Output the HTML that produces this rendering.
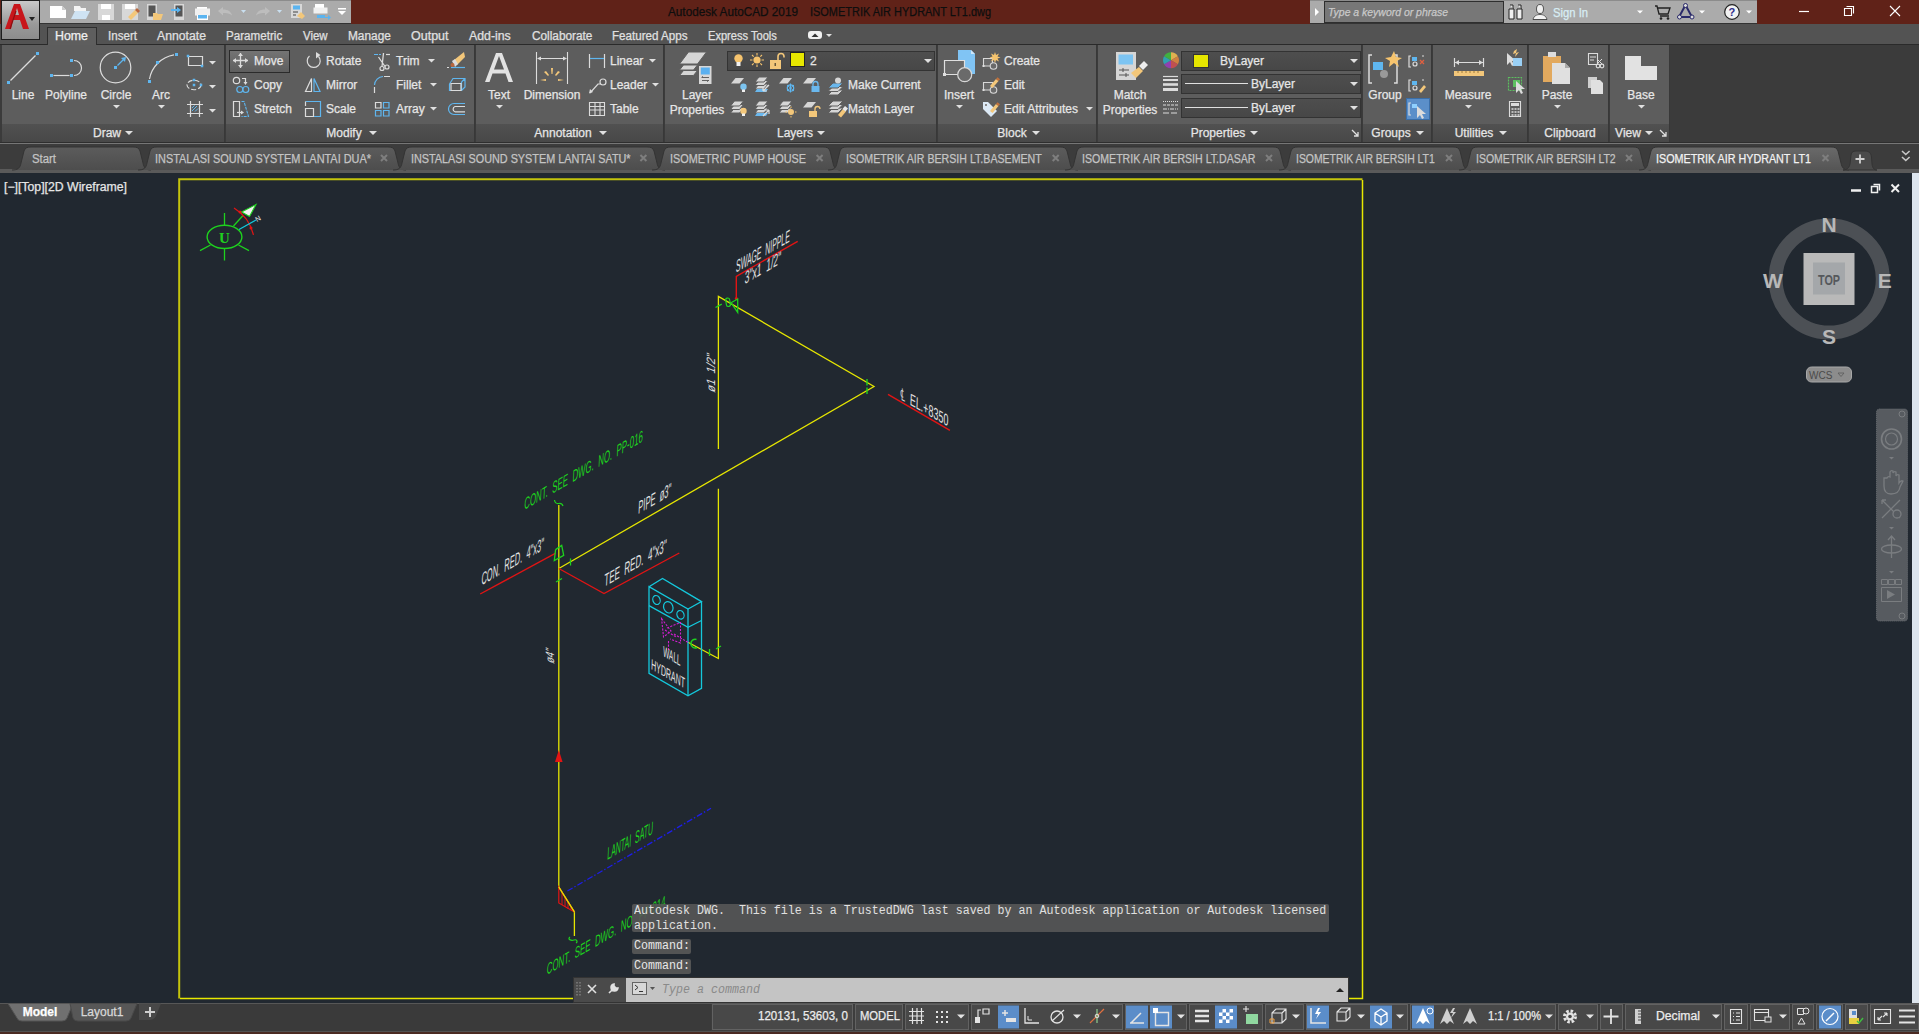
<!DOCTYPE html>
<html><head><meta charset="utf-8"><style>
html,body{margin:0;padding:0;}
body{width:1919px;height:1034px;overflow:hidden;position:relative;background:#212830;font-family:"Liberation Sans", sans-serif;}
svg{position:absolute;overflow:visible;}
.t{-webkit-text-stroke:0.25px currentColor;}
</style></head><body>
<div style="position:absolute;left:0px;top:0px;width:1919px;height:24px;background:#602218"></div><div style="position:absolute;left:1px;top:0px;width:39px;height:40px;background:linear-gradient(#c9c9c9,#9a9a9a 60%,#8c8c8c);border:1px solid #1e1e1e;box-sizing:border-box;z-index:3"></div><svg style="left:1px;top:1px;z-index:4" width="34" height="34" viewBox="0 0 34 34"><path d="M4 28 L13 3 L19 3 L28 28 L22 28 L19 19 L12 19 L10 28 Z M14 14 L18 14 L16 7 Z" fill="#c8161b"/><path d="M9 28 L15 10" stroke="#8a0f12" stroke-width="1.2"/><path d="M31 17 L37 17 L34 21 Z" fill="#222" transform="translate(-3,-1)"/></svg><div style="position:absolute;left:40px;top:0px;width:311px;height:23px;background:#ababab"></div><div style="position:absolute;left:1310px;top:0px;width:447px;height:24px;background:#ababab"></div><div style="position:absolute;left:0px;top:24px;width:1919px;height:1px;background:#2c2c2c"></div><div style="position:absolute;left:40px;top:24px;width:1879px;height:20px;background:#535353"></div><div style="position:absolute;left:0px;top:24px;width:40px;height:20px;background:#535353"></div><div style="position:absolute;left:0px;top:44px;width:1919px;height:1px;background:#2a2a2a"></div><div style="position:absolute;left:47px;top:27px;width:50px;height:18px;background:#5e5e5e;border:1px solid #2e2e2e;border-bottom:none;box-sizing:border-box;z-index:1"></div><svg style="left:0;top:0;z-index:2" width="840" height="44"><rect x="808" y="31" width="14" height="8" rx="3" fill="#f0f0f0"/><path d="M811.5 37 L815 33.5 L818.5 37Z" fill="#333"/><path d="M826 34 h6 l-3 3Z" fill="#e0e0e0"/></svg><div style="position:absolute;left:0px;top:45px;width:1919px;height:98px;background:#3b3b3b"></div><div style="position:absolute;left:2px;top:45px;width:223px;height:97px;background:#5d5d5d;border-right:1px solid #383838;box-sizing:border-box"></div><div style="position:absolute;left:2px;top:124px;width:222px;height:18px;background:linear-gradient(#515151,#484848)"></div><div style="position:absolute;left:226px;top:45px;width:249px;height:97px;background:#5d5d5d;border-right:1px solid #383838;box-sizing:border-box"></div><div style="position:absolute;left:226px;top:124px;width:248px;height:18px;background:linear-gradient(#515151,#484848)"></div><div style="position:absolute;left:476px;top:45px;width:188px;height:97px;background:#5d5d5d;border-right:1px solid #383838;box-sizing:border-box"></div><div style="position:absolute;left:476px;top:124px;width:187px;height:18px;background:linear-gradient(#515151,#484848)"></div><div style="position:absolute;left:665px;top:45px;width:272px;height:97px;background:#5d5d5d;border-right:1px solid #383838;box-sizing:border-box"></div><div style="position:absolute;left:665px;top:124px;width:271px;height:18px;background:linear-gradient(#515151,#484848)"></div><div style="position:absolute;left:938px;top:45px;width:159px;height:97px;background:#5d5d5d;border-right:1px solid #383838;box-sizing:border-box"></div><div style="position:absolute;left:938px;top:124px;width:158px;height:18px;background:linear-gradient(#515151,#484848)"></div><div style="position:absolute;left:1098px;top:45px;width:264px;height:97px;background:#5d5d5d;border-right:1px solid #383838;box-sizing:border-box"></div><div style="position:absolute;left:1098px;top:124px;width:263px;height:18px;background:linear-gradient(#515151,#484848)"></div><div style="position:absolute;left:1363px;top:45px;width:69px;height:97px;background:#5d5d5d;border-right:1px solid #383838;box-sizing:border-box"></div><div style="position:absolute;left:1363px;top:124px;width:68px;height:18px;background:linear-gradient(#515151,#484848)"></div><div style="position:absolute;left:1433px;top:45px;width:95px;height:97px;background:#5d5d5d;border-right:1px solid #383838;box-sizing:border-box"></div><div style="position:absolute;left:1433px;top:124px;width:94px;height:18px;background:linear-gradient(#515151,#484848)"></div><div style="position:absolute;left:1529px;top:45px;width:80px;height:97px;background:#5d5d5d;border-right:1px solid #383838;box-sizing:border-box"></div><div style="position:absolute;left:1529px;top:124px;width:79px;height:18px;background:linear-gradient(#515151,#484848)"></div><div style="position:absolute;left:1610px;top:45px;width:60px;height:97px;background:#5d5d5d;border-right:1px solid #383838;box-sizing:border-box"></div><div style="position:absolute;left:1610px;top:124px;width:59px;height:18px;background:linear-gradient(#515151,#484848)"></div><div style="position:absolute;left:0px;top:45px;width:2px;height:97px;background:#3b3b3b"></div><div style="position:absolute;left:0px;top:142px;width:1919px;height:1px;background:#2e2e2e"></div><div style="position:absolute;left:0px;top:143px;width:1919px;height:1px;background:#767676"></div><div style="position:absolute;left:0px;top:144px;width:1919px;height:29px;background:#3c3c3c"></div><div style="position:absolute;left:0px;top:169px;width:1919px;height:4px;background:#5a5a5a"></div><div style="position:absolute;left:0px;top:1003px;width:1919px;height:29px;background:#3a3a3a"></div><div style="position:absolute;left:0px;top:1032px;width:1919px;height:2px;background:#4a2a22"></div><svg style="left:125px;top:131px" width="8" height="4"><path d="M0 0 L8 0 L4 4 Z" fill="#e0e0e0"/></svg><svg style="left:369px;top:131px" width="8" height="4"><path d="M0 0 L8 0 L4 4 Z" fill="#e0e0e0"/></svg><svg style="left:599px;top:131px" width="8" height="4"><path d="M0 0 L8 0 L4 4 Z" fill="#e0e0e0"/></svg><svg style="left:817px;top:131px" width="8" height="4"><path d="M0 0 L8 0 L4 4 Z" fill="#e0e0e0"/></svg><svg style="left:1032px;top:131px" width="8" height="4"><path d="M0 0 L8 0 L4 4 Z" fill="#e0e0e0"/></svg><svg style="left:1250px;top:131px" width="8" height="4"><path d="M0 0 L8 0 L4 4 Z" fill="#e0e0e0"/></svg><svg style="left:1416px;top:131px" width="8" height="4"><path d="M0 0 L8 0 L4 4 Z" fill="#e0e0e0"/></svg><svg style="left:1499px;top:131px" width="8" height="4"><path d="M0 0 L8 0 L4 4 Z" fill="#e0e0e0"/></svg><svg style="left:1645px;top:131px" width="8" height="4"><path d="M0 0 L8 0 L4 4 Z" fill="#e0e0e0"/></svg><svg style="left:1351px;top:129px" width="9" height="9"><path d="M1 1 L7 7 M3 7 L7 7 L7 3" stroke="#e0e0e0" stroke-width="1.3" fill="none"/></svg><svg style="left:1659px;top:129px" width="9" height="9"><path d="M1 1 L7 7 M3 7 L7 7 L7 3" stroke="#e0e0e0" stroke-width="1.3" fill="none"/></svg><svg style="left:112.5px;top:105px" width="7.0" height="3.5"><path d="M0 0 L7.0 0 L3.5 3.5 Z" fill="#e0e0e0"/></svg><svg style="left:157.5px;top:105px" width="7.0" height="3.5"><path d="M0 0 L7.0 0 L3.5 3.5 Z" fill="#e0e0e0"/></svg><svg style="left:208.5px;top:61px" width="7.0" height="3.5"><path d="M0 0 L7.0 0 L3.5 3.5 Z" fill="#e0e0e0"/></svg><svg style="left:208.5px;top:85px" width="7.0" height="3.5"><path d="M0 0 L7.0 0 L3.5 3.5 Z" fill="#e0e0e0"/></svg><svg style="left:208.5px;top:109px" width="7.0" height="3.5"><path d="M0 0 L7.0 0 L3.5 3.5 Z" fill="#e0e0e0"/></svg><div style="position:absolute;left:229px;top:50px;width:61px;height:23px;background:linear-gradient(#747474,#5e5e5e);border:1px solid #2b2b2b;box-sizing:border-box"></div><svg style="left:427.5px;top:59px" width="7.0" height="3.5"><path d="M0 0 L7.0 0 L3.5 3.5 Z" fill="#e0e0e0"/></svg><svg style="left:429.5px;top:83px" width="7.0" height="3.5"><path d="M0 0 L7.0 0 L3.5 3.5 Z" fill="#e0e0e0"/></svg><svg style="left:429.5px;top:107px" width="7.0" height="3.5"><path d="M0 0 L7.0 0 L3.5 3.5 Z" fill="#e0e0e0"/></svg><svg style="left:495.5px;top:105px" width="7.0" height="3.5"><path d="M0 0 L7.0 0 L3.5 3.5 Z" fill="#e0e0e0"/></svg><svg style="left:648.5px;top:59px" width="7.0" height="3.5"><path d="M0 0 L7.0 0 L3.5 3.5 Z" fill="#e0e0e0"/></svg><svg style="left:651.5px;top:83px" width="7.0" height="3.5"><path d="M0 0 L7.0 0 L3.5 3.5 Z" fill="#e0e0e0"/></svg><div style="position:absolute;left:727px;top:51px;width:208px;height:20px;background:linear-gradient(#4e4e4e,#474747);border:1px solid #333;box-sizing:border-box"></div><svg style="left:924px;top:59px" width="8" height="4"><path d="M0 0 L8 0 L4 4 Z" fill="#e0e0e0"/></svg><svg style="left:955.5px;top:105px" width="7.0" height="3.5"><path d="M0 0 L7.0 0 L3.5 3.5 Z" fill="#e0e0e0"/></svg><svg style="left:1085.5px;top:107px" width="7.0" height="3.5"><path d="M0 0 L7.0 0 L3.5 3.5 Z" fill="#e0e0e0"/></svg><div style="position:absolute;left:1181px;top:51px;width:180px;height:20px;background:linear-gradient(#4e4e4e,#474747);border:1px solid #333;box-sizing:border-box"></div><svg style="left:1350px;top:59px" width="8" height="4"><path d="M0 0 L8 0 L4 4 Z" fill="#e0e0e0"/></svg><div style="position:absolute;left:1181px;top:74px;width:180px;height:20px;background:linear-gradient(#4e4e4e,#474747);border:1px solid #333;box-sizing:border-box"></div><svg style="left:1350px;top:82px" width="8" height="4"><path d="M0 0 L8 0 L4 4 Z" fill="#e0e0e0"/></svg><div style="position:absolute;left:1181px;top:98px;width:180px;height:20px;background:linear-gradient(#4e4e4e,#474747);border:1px solid #333;box-sizing:border-box"></div><svg style="left:1350px;top:106px" width="8" height="4"><path d="M0 0 L8 0 L4 4 Z" fill="#e0e0e0"/></svg><div style="position:absolute;left:1193px;top:54px;width:16px;height:14px;background:#e6e600;border:1px solid #333;box-sizing:border-box"></div><div style="position:absolute;left:1185px;top:83px;width:63px;height:1px;background:#e0e0e0"></div><div style="position:absolute;left:1185px;top:107px;width:63px;height:1px;background:#e0e0e0"></div><svg style="left:1464.5px;top:105px" width="7.0" height="3.5"><path d="M0 0 L7.0 0 L3.5 3.5 Z" fill="#e0e0e0"/></svg><svg style="left:1553.5px;top:105px" width="7.0" height="3.5"><path d="M0 0 L7.0 0 L3.5 3.5 Z" fill="#e0e0e0"/></svg><svg style="left:1637.5px;top:105px" width="7.0" height="3.5"><path d="M0 0 L7.0 0 L3.5 3.5 Z" fill="#e0e0e0"/></svg><div style="position:absolute;left:790px;top:52px;width:15px;height:15px;background:#e6e600;border:1px solid #222;box-sizing:border-box;z-index:6"></div><div style="position:absolute;left:1406px;top:98px;width:24px;height:22px;background:#5b8fc9;border:1px solid #3a6ea8;box-sizing:border-box;z-index:4"></div><svg style="left:0;top:0;z-index:5" width="1919" height="173"><path d="M10.5 80.5 L35.5 55.5" stroke="#dcdcdc" stroke-width="1.2" fill="none" /><rect x="7.0" y="81.0" width="3" height="3" fill="#5fb6ef"/><rect x="36.0" y="52.0" width="3" height="3" fill="#5fb6ef"/><path d="M53.5 75.5 L69.5 75.5" stroke="#dcdcdc" stroke-width="1.2" fill="none" /><path d="M74 60.5 A7.5 7.5 0 0 1 74 75.5" stroke="#dcdcdc" stroke-width="1.2" fill="none" /><rect x="50.0" y="74.0" width="3" height="3" fill="#5fb6ef"/><rect x="70.0" y="74.0" width="3" height="3" fill="#5fb6ef"/><rect x="70.0" y="59.0" width="3" height="3" fill="#5fb6ef"/><circle cx="115.5" cy="67.5" r="15.3" stroke="#dcdcdc" stroke-width="1.2" fill="none"/><rect x="114.0" y="66.0" width="3" height="3" fill="#5fb6ef"/><path d="M117.5 65.5 L124.5 58.5" stroke="#5fb6ef" stroke-width="1.2" fill="none" /><path d="M126 57 L121 58 L125 62 Z" fill="#5fb6ef"/><path d="M149.5 79 A30 30 0 0 1 174 54.8" stroke="#dcdcdc" stroke-width="1.2" fill="none" /><rect x="148.0" y="80.0" width="3" height="3" fill="#5fb6ef"/><rect x="156.0" y="61.0" width="3" height="3" fill="#5fb6ef"/><rect x="175.0" y="53.0" width="3" height="3" fill="#5fb6ef"/><path d="M188.5 56.5 L202.5 56.5 L202.5 65.5 L188.5 65.5 Z" stroke="#dcdcdc" stroke-width="1.2" fill="none" /><rect x="186.75" y="54.75" width="2.5" height="2.5" fill="#5fb6ef"/><rect x="200.75" y="64.75" width="2.5" height="2.5" fill="#5fb6ef"/><ellipse cx="194" cy="85" rx="7" ry="4.7" stroke="#dcdcdc" stroke-width="1.1" fill="none" stroke-dasharray="5 2"/><rect x="192.75" y="78.75" width="2.5" height="2.5" fill="#5fb6ef"/><rect x="192.75" y="83.75" width="2.5" height="2.5" fill="#5fb6ef"/><rect x="199.75" y="83.75" width="2.5" height="2.5" fill="#5fb6ef"/><path d="M187 104.5 L203 104.5 M187 113.5 L203 113.5 M190.5 101 L190.5 117 M199.5 101 L199.5 117" stroke="#dcdcdc" stroke-width="1.2" fill="none" /><path d="M192 111 L197 106 M192 108 L194.5 105.5 M195 111.5 L198 108.5" stroke="#5fb6ef" stroke-width="1" fill="none" /><path d="M233 60.5 L248 60.5 M240.5 53 L240.5 68" stroke="#dcdcdc" stroke-width="1.3" fill="none" /><path d="M233 60.5 L236 58 L236 63Z M248 60.5 L245 58 L245 63Z M240.5 53 L238 56 L243 56Z M240.5 68 L238 65 L243 65Z" fill="#dcdcdc"/><circle cx="236.5" cy="80.5" r="3.2" stroke="#dcdcdc" stroke-width="1.2" fill="none"/><path d="M242 78.5 L245.5 78.5 L245.5 83" stroke="#dcdcdc" stroke-width="1.2" fill="none" /><path d="M243.5 82 L247.5 82 L245.5 85 Z" fill="#dcdcdc"/><circle cx="239.8" cy="89.5" r="3" stroke="#5fb6ef" stroke-width="1.2" fill="none"/><circle cx="245.8" cy="89.5" r="3" stroke="#5fb6ef" stroke-width="1.2" fill="none"/><path d="M233.5 101.5 L239.5 101.5 L239.5 116.5 L233.5 116.5 Z" stroke="#dcdcdc" stroke-width="1.2" fill="none" /><path d="M241.5 101.5 L244 101.5 L248.5 116.5 L241.5 116.5" stroke="#5fb6ef" stroke-width="1.1" fill="none" stroke-dasharray="3 1"/><path d="M237 112.5 L243 112.5" stroke="#dcdcdc" stroke-width="1.2" fill="none" /><path d="M244 112.5 L241 110.5 L241 114.5Z" fill="#dcdcdc"/><path d="M309.5 56 A6.5 6.5 0 1 0 318.5 56.5" stroke="#dcdcdc" stroke-width="1.2" fill="none" /><path d="M316 52 L320.5 55 L316 58.5 Z" fill="#dcdcdc"/><path d="M305.5 91.5 L311.5 91.5 L311.5 78.5 Z" stroke="#dcdcdc" stroke-width="1.2" fill="none" /><path d="M314 91.5 L320 91.5 L314 78.5 Z" stroke="#5fb6ef" stroke-width="1.2" fill="none" /><path d="M305.5 101.5 L320.5 101.5 L320.5 116.5 L314 116.5" stroke="#5fb6ef" stroke-width="1.2" fill="none" /><path d="M305.5 101.5 L305.5 106" stroke="#dcdcdc" stroke-width="1.2" fill="none" /><path d="M305.5 108.5 L313.5 108.5 L313.5 116.5 L305.5 116.5 Z" stroke="#dcdcdc" stroke-width="1.2" fill="none" /><path d="M374 54.5 L378 54.5 M379 54.5 L381 54.5" stroke="#5fb6ef" stroke-width="1.2" fill="none" /><path d="M386 54.5 L390 54.5" stroke="#dcdcdc" stroke-width="1.2" fill="none" /><path d="M378.5 57 L385 66.5 M383.5 53 L382 66.5" stroke="#dcdcdc" stroke-width="1.3" fill="none" /><circle cx="382" cy="68.5" r="2" stroke="#dcdcdc" stroke-width="1.2" fill="none"/><circle cx="387" cy="67" r="2" stroke="#dcdcdc" stroke-width="1.2" fill="none"/><path d="M374.5 85 A9 9 0 0 1 383 76.5" stroke="#5fb6ef" stroke-width="1.2" fill="none" /><path d="M374.5 87 L374.5 93 M384 76.5 L390 76.5" stroke="#dcdcdc" stroke-width="1.2" fill="none" /><path d="M375.5 102.5 h5.5 v5.5 h-5.5 Z" stroke="#dcdcdc" stroke-width="1.2" fill="none" /><path d="M383.5 102.5 h5.5 v5.5 h-5.5 Z" stroke="#5fb6ef" stroke-width="1.2" fill="none" /><path d="M375.5 110.5 h5.5 v5.5 h-5.5 Z" stroke="#5fb6ef" stroke-width="1.2" fill="none" /><path d="M383.5 110.5 h5.5 v5.5 h-5.5 Z" stroke="#5fb6ef" stroke-width="1.2" fill="none" /><path d="M451 67.5 L465 67.5" stroke="#5fb6ef" stroke-width="1.2" fill="none" /><path d="M447 67.5 L449 67.5" stroke="#dcdcdc" stroke-width="1.2" fill="none" /><path d="M454 60 L464 52 L465 57 L457 65 Z" fill="#f3c77a"/><path d="M452 61 L455 59 L458 64 L455 67 Z" fill="#dcdcdc"/><circle cx="452.5" cy="65" r="2" stroke="#b9663d" stroke-width="0" fill="#b9663d"/><path d="M449.5 84 L449.5 90.5 L461.5 90.5 L461.5 82 M449.5 84 L453 78.5 L465 78.5 L465 87 L461.5 90.5 M461.5 82 L465 78.5" stroke="#5fb6ef" stroke-width="1.2" fill="none" /><path d="M451 83.5 h10 v7 h-10 Z" stroke="#dcdcdc" stroke-width="1.2" fill="none" /><path d="M465 103.5 L454 103.5 A5.5 5.5 0 0 0 454 114.5 L465 114.5" stroke="#5fb6ef" stroke-width="1.2" fill="none" /><path d="M465 106.5 L455 106.5 A2.8 2.8 0 0 0 455 111.8 L465 111.8" stroke="#dcdcdc" stroke-width="1.2" fill="none" /><path d="M496 53 L502 53 L513 82 L508.5 82 L505.5 73.5 L492.5 73.5 L489.5 82 L485 82 Z M494 69.5 L504 69.5 L499 56 Z" fill="#e2e2e2"/><path d="M536.5 52 L536.5 84 M567.5 52 L567.5 84 M538 58.5 L566 58.5" stroke="#dcdcdc" stroke-width="1.1" fill="none" /><path d="M537 58.5 L541 56.5 L541 60.5Z M567 58.5 L563 56.5 L563 60.5Z" fill="#dcdcdc"/><path d="M551 68 L553 68 L552.5 74 L551.5 74 Z M544 72 L546 71 L549 75 L548 76 Z M560 72 L558 71 L555 75 L556 76 Z M540 80 L546 79 L546 81 Z M564 80 L558 79 L558 81 Z" fill="#f3c77a"/><path d="M589.5 54 L589.5 68 M604.5 54 L604.5 68" stroke="#dcdcdc" stroke-width="1.2" fill="none" /><path d="M590 58.5 L604 58.5" stroke="#5fb6ef" stroke-width="1.2" fill="none" /><path d="M590 93 L598 84 L600 84" stroke="#dcdcdc" stroke-width="1.2" fill="none" /><circle cx="603" cy="82" r="3" stroke="#dcdcdc" stroke-width="1.2" fill="none"/><path d="M589 93.5 L590 89 L593 92 Z" fill="#dcdcdc"/><path d="M589.5 102.5 h15 v13 h-15 Z M589.5 106.5 h15 M589.5 110 h15 M595 102.5 v13 M600 102.5 v13" stroke="#dcdcdc" stroke-width="1.1" fill="none" /><path d="M683.5 70.5 L697.5 70.5 L693.5 75.5 L679.5 75.5 Z" fill="#d6d6d6" stroke="#5e5e5e" stroke-width="1"/><path d="M683.5 65 L697.5 65 L693.5 70 L679.5 70 Z" fill="#d6d6d6" stroke="#5e5e5e" stroke-width="1"/><path d="M688.5 52 L706.5 52 L697.5 64 L679.5 64 Z" fill="#d6d6d6" stroke="#5e5e5e" stroke-width="1"/><path d="M698.5 65.5 h13.5 v18.5 h-13.5 Z" fill="#5e5e5e"/><path d="M699 66 h12.5 v18 h-12.5 Z" fill="#d8d8d8"/><path d="M700.8 67.5 h9 v7 h-9 Z" fill="#5ab0f0"/><path d="M702 77.5 h7 M701.5 77.5 l1.5 -1.2 M702 80.5 h7 M708.5 80.5 l-1.5 1.2" stroke="#555" stroke-width="0.9" fill="none" /><circle cx="738.5" cy="58.5" r="4.2" stroke="#f6c46e" stroke-width="0" fill="#f6c46e"/><path d="M736.5 62 h4 v4 h-4Z" fill="#f0f0f0"/><circle cx="757" cy="60" r="3.6" stroke="#f6c46e" stroke-width="0" fill="#f6c46e"/><path d="M757 53 v2.5 M757 64.5 v2.5 M750 60 h2.5 M761.5 60 h2.5 M752 55 l1.7 1.7 M762 55 l-1.7 1.7 M752 65 l1.7 -1.7 M762 65 l-1.7 -1.7" stroke="#f6c46e" stroke-width="1.1" fill="none" /><path d="M770 60 h11 v9 h-11 Z" fill="#f3c77a"/><path d="M778 60 v-3.5 a3 3 0 0 1 6 0 v1" stroke="#f3c77a" stroke-width="1.6" fill="none" /><path d="M774.5 63 h1.5 v3 h-1.5Z" fill="#6a5a3a"/><path d="M735.5 78 L744 78 L739.5 83.5 L731 83.5 Z" fill="#d6d6d6"/><circle cx="743.5" cy="86.8" r="3.2" stroke="#7cc4f0" stroke-width="0" fill="#7cc4f0"/><path d="M742 89.5 h3 v2.5 h-3Z" fill="#f0f0f0"/><path d="M759 84.0 L768 84.0 L764 89.0 L755 89.0 Z" fill="#d6d6d6" stroke="#5e5e5e" stroke-width="1"/><path d="M759 80.5 L768 80.5 L764 85.5 L755 85.5 Z" fill="#d6d6d6" stroke="#5e5e5e" stroke-width="1"/><path d="M759 77.0 L768 77.0 L764 82.0 L755 82.0 Z" fill="#d6d6d6" stroke="#5e5e5e" stroke-width="1"/><path d="M763.5 88.5 h4.5 v-4.5" stroke="#5fb6ef" stroke-width="0" fill="none" /><path d="M768 84.5 L762 90.5 M762 90.5 h4 M762 90.5 v-4" stroke="#dcdcdc" stroke-width="1.2" fill="none" /><path d="M759 84.0 L768 84.0 L764 89.0 L755 89.0 Z" fill="#d6d6d6" stroke="#5e5e5e" stroke-width="1"/><path d="M759 80.5 L768 80.5 L764 85.5 L755 85.5 Z" fill="#d6d6d6" stroke="#5e5e5e" stroke-width="1"/><path d="M759 77.0 L768 77.0 L764 82.0 L755 82.0 Z" fill="#d6d6d6" stroke="#5e5e5e" stroke-width="1"/><path d="M757 89 L768 89 L766 92 L755 92 Z" fill="#6ab8ee"/><path d="M769 85 L763 91 M763 91 h4 M763 91 v-4" stroke="#dcdcdc" stroke-width="1.2" fill="none" /><path d="M783.5 78 L792 78 L787.5 83.5 L779 83.5 Z" fill="#d6d6d6"/><circle cx="790.5" cy="88" r="3.2" stroke="#5fb6ef" stroke-width="1.2" fill="none"/><path d="M787 85 l7 6 M794 85 l-7 6 M790.5 83.5 v9" stroke="#5fb6ef" stroke-width="1" fill="none" /><path d="M807.5 78 L816 78 L811.5 83.5 L803 83.5 Z" fill="#d6d6d6"/><path d="M811.5 86 h8 v6 h-8Z" fill="#6ab8ee"/><path d="M813 86 v-2 a2.5 2.5 0 0 1 5 0 v2" stroke="#6ab8ee" stroke-width="1.3" fill="none" /><path d="M833 90.0 L843 90.0 L838 95.0 L828 95.0 Z" fill="#d6d6d6" stroke="#5e5e5e" stroke-width="1"/><path d="M833 86.5 L843 86.5 L838 91.5 L828 91.5 Z" fill="#d6d6d6" stroke="#5e5e5e" stroke-width="1"/><path d="M833 83.0 L843 83.0 L838 88.0 L828 88.0 Z" fill="#6ab8ee" stroke="#5e5e5e" stroke-width="1"/><circle cx="838" cy="80.5" r="3" stroke="#d6d6d6" stroke-width="0" fill="#d6d6d6"/><path d="M734.5 108.0 L743.5 108.0 L739.5 113.0 L730.5 113.0 Z" fill="#d6d6d6" stroke="#5e5e5e" stroke-width="1"/><path d="M734.5 104.5 L743.5 104.5 L739.5 109.5 L730.5 109.5 Z" fill="#d6d6d6" stroke="#5e5e5e" stroke-width="1"/><path d="M734.5 101.0 L743.5 101.0 L739.5 106.0 L730.5 106.0 Z" fill="#d6d6d6" stroke="#5e5e5e" stroke-width="1"/><circle cx="743.5" cy="111" r="3.2" stroke="#f3c77a" stroke-width="0" fill="#f3c77a"/><path d="M742 113.5 h3 v2.5 h-3Z" fill="#f0f0f0"/><path d="M759 108.0 L768 108.0 L764 113.0 L755 113.0 Z" fill="#d6d6d6" stroke="#5e5e5e" stroke-width="1"/><path d="M759 104.5 L768 104.5 L764 109.5 L755 109.5 Z" fill="#d6d6d6" stroke="#5e5e5e" stroke-width="1"/><path d="M759 101.0 L768 101.0 L764 106.0 L755 106.0 Z" fill="#d6d6d6" stroke="#5e5e5e" stroke-width="1"/><path d="M757 113 L768 113 L766 116 L755 116 Z" fill="#6ab8ee"/><path d="M763 116 L769 110 M769 110 h-4 M769 110 v4" stroke="#dcdcdc" stroke-width="1.2" fill="none" /><path d="M783 108.0 L792 108.0 L788 113.0 L779 113.0 Z" fill="#d6d6d6" stroke="#5e5e5e" stroke-width="1"/><path d="M783 104.5 L792 104.5 L788 109.5 L779 109.5 Z" fill="#d6d6d6" stroke="#5e5e5e" stroke-width="1"/><path d="M783 101.0 L792 101.0 L788 106.0 L779 106.0 Z" fill="#d6d6d6" stroke="#5e5e5e" stroke-width="1"/><circle cx="791" cy="112" r="3" stroke="#f3c77a" stroke-width="0" fill="#f3c77a"/><path d="M791 106.5 v1.5 M791 116 v1.5 M785.5 112 h1.5 M795 112 h1.5" stroke="#f6c46e" stroke-width="1" fill="none" /><path d="M807.5 102 L816 102 L811.5 107.5 L803 107.5 Z" fill="#d6d6d6"/><path d="M809 111 h8 v6 h-8Z" fill="#f3c77a"/><path d="M815 111 v-2 a2.5 2.5 0 0 1 5 0" stroke="#f3c77a" stroke-width="1.3" fill="none" /><path d="M833 108.0 L843 108.0 L838 113.0 L828 113.0 Z" fill="#d6d6d6" stroke="#5e5e5e" stroke-width="1"/><path d="M833 104.5 L843 104.5 L838 109.5 L828 109.5 Z" fill="#d6d6d6" stroke="#5e5e5e" stroke-width="1"/><path d="M833 101.0 L843 101.0 L838 106.0 L828 106.0 Z" fill="#d6d6d6" stroke="#5e5e5e" stroke-width="1"/><path d="M838 115 l5 -6 l3 2.5 l-5 6Z" fill="#f3c77a"/><path d="M842.5 109 l2.5 -3 l3 2.5 l-2.5 3Z" fill="#e8e8e8"/><path d="M958 50 h13 l4 4 v20 h-17 Z" fill="#80c4f4"/><path d="M971 50 l4 4 h-4Z" fill="#cfe6f8"/><path d="M944.5 60.5 h20 v14 h-20 Z" stroke="#e0e0e0" stroke-width="1.2" fill="#6a6a6a" /><circle cx="964.7" cy="74.7" r="7" stroke="#d8d8d8" stroke-width="1.2" fill="#6a6a6a"/><path d="M943 73 h3 v3 h-3Z" fill="#e0e0e0"/><path d="M983.5 58.5 h9 v7.5 h-9 Z" stroke="#d8d8d8" stroke-width="1.1" fill="#6a6a6a" /><circle cx="993.5" cy="66" r="3.3" stroke="#d8d8d8" stroke-width="1.1" fill="#6a6a6a"/><path d="M982.5 65 h2 v2 h-2Z" fill="#e0e0e0"/><path d="M983.5 82.5 h9 v7.5 h-9 Z" stroke="#d8d8d8" stroke-width="1.1" fill="#6a6a6a" /><circle cx="993.5" cy="90" r="3.3" stroke="#d8d8d8" stroke-width="1.1" fill="#6a6a6a"/><path d="M982.5 89 h2 v2 h-2Z" fill="#e0e0e0"/><path d="M995 52 l1 3 l3 -1.5 l-1.5 3 l3 1 l-3 1 l1.5 3 l-3 -1.5 l-1 3 l-1 -3 l-3 1.5 l1.5 -3 l-3 -1 l3 -1 l-1.5 -3 l3 1.5 Z" fill="#f6c46e"/><path d="M990 86 l6 -7 l2.5 2 l-6 7 Z" fill="#f3c77a"/><path d="M996 79 l1.5 -1.7 l2.5 2 l-1.5 1.7Z" fill="#c0703c"/><path d="M983 102 l5 0 l9 9 l-6 6 l-8 -8 Z" fill="#dbe8f4"/><path d="M985 104 h2 v2 h-2Z" fill="#888"/><path d="M990 111 l6 -7 l2.5 2 l-6 7 Z" fill="#f3c77a"/><path d="M996 104 l1.5 -1.7 l2.5 2 l-1.5 1.7Z" fill="#c0703c"/><path d="M1116 52 h20 v28 h-20 Z" fill="#d6d6d6"/><path d="M1118.5 54.5 h14.5 v10 h-14.5 Z" fill="#7cc4f2"/><path d="M1119 70 h10 M1119 75 h10 M1123 68 v4 M1126 73 v4" stroke="#555" stroke-width="1" fill="none" /><path d="M1131 73 L1139 67 L1143 71 L1136 78 Z" fill="#f3c77a"/><path d="M1139 66 l3 -3 l2 -2 l4 4 l-2 2 l-3 3 Z" fill="#eeeeee"/><path d="M1171 60.2 L1171.0 52.2 A8 8 0 0 1 1177.9 56.2 Z" fill="#e0b050"/><path d="M1171 60.2 L1177.9 56.2 A8 8 0 0 1 1177.9 64.2 Z" fill="#d08040"/><path d="M1171 60.2 L1177.9 64.2 A8 8 0 0 1 1171.0 68.2 Z" fill="#c05050"/><path d="M1171 60.2 L1171.0 68.2 A8 8 0 0 1 1164.1 64.2 Z" fill="#9040b0"/><path d="M1171 60.2 L1164.1 64.2 A8 8 0 0 1 1164.1 56.2 Z" fill="#30a0b0"/><path d="M1171 60.2 L1164.1 56.2 A8 8 0 0 1 1171.0 52.2 Z" fill="#40b040"/><path d="M1163 76.5 h15" stroke="#dcdcdc" stroke-width="1.2" fill="none" /><path d="M1163 80 h15" stroke="#dcdcdc" stroke-width="2" fill="none" /><path d="M1163 84.5 h15" stroke="#dcdcdc" stroke-width="2.6" fill="none" /><path d="M1163 89.5 h15" stroke="#dcdcdc" stroke-width="3" fill="none" /><path d="M1163 101.5 h15" stroke="#dcdcdc" stroke-width="1" fill="none" stroke-dasharray="1 1"/><path d="M1163 105 h15" stroke="#dcdcdc" stroke-width="1.2" fill="none" stroke-dasharray="3 1"/><path d="M1163 109 h15" stroke="#dcdcdc" stroke-width="1.2" fill="none" stroke-dasharray="4 1 1 1"/><path d="M1163 113 h15" stroke="#dcdcdc" stroke-width="1.2" fill="none" stroke-dasharray="6 2"/><path d="M1372 55 h-3 v28 h3 M1394 55 h3 v28 h-3" stroke="#dcdcdc" stroke-width="1.5" fill="none" /><path d="M1373 62 h10 v8 h-10Z" fill="#5fb6ef"/><circle cx="1384" cy="74" r="4" stroke="#999" stroke-width="0" fill="#999"/><path d="M1391 57 l3 -6 l2 6 l6 1 l-5 3 l2 6 l-5 -4 l-5 4 l1 -6 l-5 -3 Z" fill="#f6c46e"/><path d="M1411 56 h-2 v11 h2 M1422 56 h2" stroke="#dcdcdc" stroke-width="1.2" fill="none" /><path d="M1412 57 h5 v4 h-5Z" fill="#5fb6ef"/><circle cx="1415" cy="64" r="2" stroke="#dcdcdc" stroke-width="1.2" fill="none"/><path d="M1420 60 l4 4 M1424 60 l-4 4" stroke="#e06040" stroke-width="1.3" fill="none" /><path d="M1411 80 h-2 v11 h2 M1422 80 h2" stroke="#dcdcdc" stroke-width="1.2" fill="none" /><path d="M1412 81 h5 v4 h-5Z" fill="#5fb6ef"/><circle cx="1415" cy="88" r="2" stroke="#dcdcdc" stroke-width="1.2" fill="none"/><path d="M1419 91 l5 -6 l2 2 l-5 6Z" fill="#f3c77a"/><path d="M1411 103 h-2 v12 h2" stroke="#dcdcdc" stroke-width="1.2" fill="none" /><path d="M1412 104 h5 v4 h-5Z" fill="#8fd0ff"/><path d="M1417 106 l0 12 l3 -3 l2 4 l2 -1 l-2 -4 l4 0 Z" fill="#dcdcdc"/><path d="M1455 62.5 L1483 62.5 M1454.5 58 v9 M1483.5 58 v9" stroke="#dcdcdc" stroke-width="1.2" fill="none" /><path d="M1455 62.5 l4 -2.5 v5Z M1483 62.5 l-4 -2.5 v5Z" fill="#dcdcdc"/><path d="M1454 71 h30 v5 h-30 Z" fill="#f3c77a"/><path d="M1458 71 v2 M1462 71 v2 M1466 71 v2 M1470 71 v2 M1474 71 v2 M1478 71 v2" stroke="#8a6a30" stroke-width="0.8" fill="none" /><path d="M1507 53 l0 12 l3 -3 l2 4 l2 -1 l-2 -4 l4 0 Z" fill="#dcdcdc"/><path d="M1513 58 h9 v8 h-9Z" fill="#9ad0f5"/><path d="M1514 51 l3 -2 l-1 4 l3 -1 l-4 5 l1 -4 l-3 1Z" fill="#f3c77a"/><path d="M1508.5 77.5 h13 v13 h-13 Z" stroke="#5cc060" stroke-width="1.2" fill="none" stroke-dasharray="2 1"/><path d="M1513 80 h7 v7 h-7Z" fill="#5cc060"/><path d="M1516 81 l0 12 l3 -3 l2 4 l2 -1 l-2 -4 l4 0 Z" fill="#dcdcdc"/><path d="M1509.5 101.5 h11 v15 h-11 Z" stroke="#dcdcdc" stroke-width="1.1" fill="none" /><path d="M1511 103 h8 v3 h-8Z" fill="#dcdcdc"/><path d="M1511.5 109 h2 M1514.5 109 h2 M1517.5 109 h2 M1511.5 112 h2 M1514.5 112 h2 M1517.5 112 h2 M1511.5 115 h2 M1514.5 115 h2 M1517.5 115 h2" stroke="#dcdcdc" stroke-width="1.5" fill="none" /><path d="M1543 56 h18 v26 h-18 Z" fill="#e2a95e"/><path d="M1548 52 h8 v5 h-8Z" fill="#ddd"/><path d="M1552 63 h13 l5 5 v16 h-18 Z" fill="#e0e0e0"/><path d="M1565 63 l5 5 h-5Z" fill="#aaa"/><path d="M1588.5 53.5 h9 v11 h-9 Z M1590 57 h6 M1590 60 h4" stroke="#dcdcdc" stroke-width="1.1" fill="none" /><circle cx="1598" cy="66" r="1.8" stroke="#dcdcdc" stroke-width="1.2" fill="none"/><circle cx="1602" cy="66" r="1.8" stroke="#dcdcdc" stroke-width="1.2" fill="none"/><path d="M1597 59 l5 5 M1602 59 l-5 5" stroke="#dcdcdc" stroke-width="1" fill="none" /><path d="M1588 77 h9 v11 h-9Z" fill="#cfcfcf"/><path d="M1591 80 h9 l3 3 v11 h-12Z" fill="#e0e0e0"/><path d="M1625 56 h16 v10 h16 v14 h-32 Z" fill="#e2e2e2"/></svg><div style="position:absolute;left:40px;top:0px;width:311px;height:1px;background:#8c8c8c"></div><div style="position:absolute;left:40px;top:23px;width:311px;height:1px;background:#333"></div><svg style="left:0;top:0;z-index:2" width="1919" height="24"><path d="M50 6 h12 l4 4 v8 h-16 Z" fill="#fff"/><path d="M62 6 l4 4 h-4Z" fill="#ccc"/><path d="M74 6 h6 l1 2 h5 v3 h-12Z" fill="#f4f4f4"/><path d="M75 11 h15 l-4 8 h-15Z" fill="#cfe3f3"/><path d="M98 4 h16 v16 h-16Z" fill="#d8d8d8"/><path d="M101 4 h10 v5 h-10Z" fill="#fff"/><path d="M102 15 h8 v5 h-8Z" fill="#fff"/><path d="M122 4 h16 v16 h-16Z" fill="#d8d8d8"/><path d="M125 4 h10 v5 h-10Z" fill="#fff"/><path d="M128 17 l7 -7 l3 3 l-7 7Z" fill="#f3c77a"/><path d="M135 10 l2 -2 l3 3 l-2 2Z" fill="#b9663d"/><path d="M147 4 h10 v16 h-10Z" fill="#d8d8d8"/><path d="M148.5 5.5 h7 v11 h-7Z" fill="#555"/><path d="M153 13 h4 l1 1 h5 l-2 6 h-8Z" fill="#f3c77a"/><path d="M174 4 h10 v16 h-10Z" fill="#d8d8d8"/><path d="M175.5 5.5 h7 v11 h-7Z" fill="#555"/><path d="M171 9 h6 v-2 l4 3 l-4 3 v-2 h-6Z" fill="#5ab4f0"/><path d="M197 7 h10 v4 h-10Z" fill="#fff"/><path d="M195 8.5 h15 v7 h-15Z" fill="#f0f0f0"/><path d="M197 15 h11 v5 h-11Z" fill="#fff"/><path d="M198 15 h9 v3.5 h-9Z" fill="#5ab4f0"/><path d="M218 11 l5 -4 v2.5 c5 0 8 2 9 6 c-2 -2 -5 -2.5 -9 -2.5 v2.5Z" fill="#bdbdbd"/><path d="M241 10 h5 l-2.5 3Z" fill="#c9dff0"/><path d="M270 11 l-5 -4 v2.5 c-5 0 -8 2 -9 6 c2 -2 5 -2.5 9 -2.5 v2.5Z" fill="#bdbdbd"/><path d="M277 10 h5 l-2.5 3Z" fill="#c9dff0"/><path d="M291 4 h11 v14 h-11Z" fill="#d8d8d8"/><path d="M293 5.5 h7 v4 h-7Z" fill="#5ab4f0"/><path d="M293 12 h5 M293 15 h3" stroke="#444" stroke-width="1" fill="none"/><path d="M297 16 l4 -4 l4 4 l-3 3Z" fill="#f3c77a"/><path d="M315 4 h9 v4 h-9Z" fill="#fff"/><path d="M313.5 7.5 h14 v6 h-14Z" fill="#f0f0f0"/><path d="M317 15 h8 v2 h3 v-2 l3 2.5 l-3 2.5 v-2 h-11Z" fill="#5ab4f0"/><path d="M338 8 h8 v1.5 h-8Z" fill="#fff"/><path d="M338 11 h8 l-4 4Z" fill="#fff"/></svg><div style="position:absolute;left:1310px;top:0px;width:447px;height:1px;background:#8c8c8c"></div><div style="position:absolute;left:1310px;top:23px;width:447px;height:1px;background:#333"></div><div style="position:absolute;left:1324px;top:1px;width:180px;height:22px;background:#777;border:1px solid #2e2e2e;box-sizing:border-box"></div><svg style="left:0;top:0;z-index:2" width="1919" height="24"><path d="M1315 8 L1319 12 L1315 16Z" fill="#fff"/><path d="M1509 9 h5 v10 h-5Z M1517 9 h5 v10 h-5Z" stroke="#222" stroke-width="1" fill="#eee"/><path d="M1510 5 h3 v4 M1518 5 h3 v4" stroke="#222" stroke-width="1" fill="#eee"/><path d="M1533 19 c1 -4 4 -5 7 -5 c3 0 6 1 7 5Z" fill="#f4f4f4"/><ellipse cx="1540" cy="9" rx="3.5" ry="4.5" fill="#f0f0f0" stroke="#333" stroke-width="0.8"/><path d="M1533 19.5 c1 -4 4 -5 7 -5 c3 0 6 1 7 5Z" stroke="#333" stroke-width="0.8" fill="none"/><path d="M1637 10.5 h6 l-3 3Z" fill="#fff"/><path d="M1655 6 h2 l2 8 h9 l2 -6 h-12 M1660 16 h9" stroke="#222" stroke-width="1.3" fill="none"/><circle cx="1661" cy="18.5" r="1.3" fill="#222"/><circle cx="1668" cy="18.5" r="1.3" fill="#222"/><path d="M1685.5 5 L1679 17 h13 Z" stroke="#2a2a6a" stroke-width="2" fill="none"/><circle cx="1685.5" cy="5.5" r="2" fill="#ddd" stroke="#2a2a6a"/><circle cx="1679.5" cy="17" r="2" fill="#ddd" stroke="#2a2a6a"/><circle cx="1692" cy="17" r="2" fill="#ddd" stroke="#2a2a6a"/><path d="M1699 10.5 h6 l-3 3Z" fill="#fff"/><circle cx="1732" cy="12" r="7.3" fill="#f2f2f2" stroke="#222" stroke-width="1.2"/><text x="1728.5" y="16" font-family="Liberation Sans" font-weight="bold" font-size="11" fill="#2c2c8c">?</text><path d="M1746 10.5 h6 l-3 3Z" fill="#fff"/><path d="M1799 11.5 h10" stroke="#fff" stroke-width="1.2" fill="none"/><path d="M1844.5 8.5 h7 v7 h-7Z M1846.5 6.5 h7 v7" stroke="#fff" stroke-width="1.1" fill="none"/><path d="M1890 6 L1900 16 M1900 6 L1890 16" stroke="#fff" stroke-width="1.1" fill="none"/></svg><svg style="left:0;top:0;z-index:2" width="1919" height="173"><defs><linearGradient id="tg" x1="0" y1="0" x2="0" y2="1"><stop offset="0" stop-color="#5c5c5c"/><stop offset="1" stop-color="#4d4d4d"/></linearGradient><linearGradient id="tga" x1="0" y1="0" x2="0" y2="1"><stop offset="0" stop-color="#6a6a6a"/><stop offset="1" stop-color="#555"/></linearGradient></defs><path d="M12 170 C18 170 20 168 21 163 L24 151 C25 148 27 147 31 147 L133 147 C137 147 139 148 140 151 L143 163 C144 168 146 170 151 170 Z" fill="url(#tg)"/><path d="M12 170 C18 170 20 168 21 163 L24 151 C25 148 27 147 31 147 L133 147 C137 147 139 148 140 151 L143 163 C144 168 146 170 151 170" fill="none" stroke="#333" stroke-width="1"/><path d="M138 170 C144 170 146 168 147 163 L150 151 C151 148 153 147 157 147 L388 147 C392 147 394 148 395 151 L398 163 C399 168 401 170 406 170 Z" fill="url(#tg)"/><path d="M138 170 C144 170 146 168 147 163 L150 151 C151 148 153 147 157 147 L388 147 C392 147 394 148 395 151 L398 163 C399 168 401 170 406 170" fill="none" stroke="#333" stroke-width="1"/><path d="M381 155 L387 161 M387 155 L381 161" stroke="#7e7e7e" stroke-width="2"/><path d="M393 170 C399 170 401 168 402 163 L405 151 C406 148 408 147 412 147 L647 147 C651 147 653 148 654 151 L657 163 C658 168 660 170 665 170 Z" fill="url(#tg)"/><path d="M393 170 C399 170 401 168 402 163 L405 151 C406 148 408 147 412 147 L647 147 C651 147 653 148 654 151 L657 163 C658 168 660 170 665 170" fill="none" stroke="#333" stroke-width="1"/><path d="M640.4 155 L646.4 161 M646.4 155 L640.4 161" stroke="#7e7e7e" stroke-width="2"/><path d="M652 170 C658 170 660 168 661 163 L664 151 C665 148 667 147 671 147 L823 147 C827 147 829 148 830 151 L833 163 C834 168 836 170 841 170 Z" fill="url(#tg)"/><path d="M652 170 C658 170 660 168 661 163 L664 151 C665 148 667 147 671 147 L823 147 C827 147 829 148 830 151 L833 163 C834 168 836 170 841 170" fill="none" stroke="#333" stroke-width="1"/><path d="M816.6 155 L822.6 161 M822.6 155 L816.6 161" stroke="#7e7e7e" stroke-width="2"/><path d="M828 170 C834 170 836 168 837 163 L840 151 C841 148 843 147 847 147 L1060 147 C1064 147 1066 148 1067 151 L1070 163 C1071 168 1073 170 1078 170 Z" fill="url(#tg)"/><path d="M828 170 C834 170 836 168 837 163 L840 151 C841 148 843 147 847 147 L1060 147 C1064 147 1066 148 1067 151 L1070 163 C1071 168 1073 170 1078 170" fill="none" stroke="#333" stroke-width="1"/><path d="M1052.7 155 L1058.7 161 M1058.7 155 L1052.7 161" stroke="#7e7e7e" stroke-width="2"/><path d="M1065 170 C1071 170 1073 168 1074 163 L1077 151 C1078 148 1080 147 1084 147 L1273 147 C1277 147 1279 148 1280 151 L1283 163 C1284 168 1286 170 1291 170 Z" fill="url(#tg)"/><path d="M1065 170 C1071 170 1073 168 1074 163 L1077 151 C1078 148 1080 147 1084 147 L1273 147 C1277 147 1279 148 1280 151 L1283 163 C1284 168 1286 170 1291 170" fill="none" stroke="#333" stroke-width="1"/><path d="M1266 155 L1272 161 M1272 155 L1266 161" stroke="#7e7e7e" stroke-width="2"/><path d="M1279 170 C1285 170 1287 168 1288 163 L1291 151 C1292 148 1294 147 1298 147 L1453 147 C1457 147 1459 148 1460 151 L1463 163 C1464 168 1466 170 1471 170 Z" fill="url(#tg)"/><path d="M1279 170 C1285 170 1287 168 1288 163 L1291 151 C1292 148 1294 147 1298 147 L1453 147 C1457 147 1459 148 1460 151 L1463 163 C1464 168 1466 170 1471 170" fill="none" stroke="#333" stroke-width="1"/><path d="M1446 155 L1452 161 M1452 155 L1446 161" stroke="#7e7e7e" stroke-width="2"/><path d="M1459 170 C1465 170 1467 168 1468 163 L1471 151 C1472 148 1474 147 1478 147 L1633 147 C1637 147 1639 148 1640 151 L1643 163 C1644 168 1646 170 1651 170 Z" fill="url(#tg)"/><path d="M1459 170 C1465 170 1467 168 1468 163 L1471 151 C1472 148 1474 147 1478 147 L1633 147 C1637 147 1639 148 1640 151 L1643 163 C1644 168 1646 170 1651 170" fill="none" stroke="#333" stroke-width="1"/><path d="M1626 155 L1632 161 M1632 155 L1626 161" stroke="#7e7e7e" stroke-width="2"/><path d="M1639 170 C1645 170 1647 168 1648 163 L1651 151 C1652 148 1654 147 1658 147 L1831 147 C1835 147 1837 148 1838 151 L1841 163 C1842 168 1844 170 1849 170 Z" fill="url(#tga)"/><path d="M1639 170 C1645 170 1647 168 1648 163 L1651 151 C1652 148 1654 147 1658 147 L1831 147 C1835 147 1837 148 1838 151 L1841 163 C1842 168 1844 170 1849 170" fill="none" stroke="#333" stroke-width="1"/><path d="M1822.5 155 L1828.5 161 M1828.5 155 L1822.5 161" stroke="#7e7e7e" stroke-width="2"/><path d="M1843 170 C1847 170 1849 168 1850 164 L1851 155 C1851.5 152 1853 151 1856 151 L1865 151 C1869 151 1871 153 1871.5 157 L1872 164 C1872.5 168 1874 170 1877 170 Z" fill="#4a4a4a" stroke="#333"/><path d="M1860 154.5 v9 M1855.5 159 h9" stroke="#d0d0d0" stroke-width="1.8"/><path d="M1902 151 l3.8 3.5 l3.8 -3.5 M1902 157 l3.8 3.5 l3.8 -3.5" stroke="#c8c8c8" stroke-width="1.6" fill="none"/></svg><svg style="left:0;top:0;z-index:1" width="1919" height="1034"><path d="M179.2 998.5 L179.2 179.2 L1362.5 179.2" stroke="#c4c40c" stroke-width="2" fill="none"/><path d="M180 998.5 L1362.5 998.5 L1362.5 180" stroke="#e8e800" stroke-width="1.5" fill="none"/><path d="M558.8 505 L558.8 887" stroke="#e6e600" stroke-width="1.3" fill="none" /><path d="M558.8 568.5 L874 386.5 L718.4 296.4 L718.4 449" stroke="#e6e600" stroke-width="1.3" fill="none" /><path d="M718.4 488.7 L718.4 658.5 L688 642.2" stroke="#e6e600" stroke-width="1.3" fill="none" /><path d="M558.8 887 L574.4 912 L574.4 936" stroke="#e6e600" stroke-width="1.3" fill="none" /><path d="M554.5 500 Q555 504 558.8 503.5 Q562 503 563 506" stroke="#1ed21e" stroke-width="1.2" fill="none"/><path d="M570 937 C567 939 571 941 574 940 C577 939 578 942 576 943" stroke="#1ed21e" stroke-width="1.2" fill="none"/><path d="M480.2 594 L555.3 553.4" stroke="#e11414" stroke-width="1.4" fill="none" /><path d="M558.8 568.5 L604 593.5 L679.3 553" stroke="#e11414" stroke-width="1.4" fill="none" /><path d="M736.3 298 L736.3 276.3 L797.7 241.3" stroke="#e11414" stroke-width="1.4" fill="none" /><circle cx="736.3" cy="298.5" r="1.5" fill="#e11414"/><path d="M888 394.4 L949.9 430.4" stroke="#e11414" stroke-width="1.4" fill="none" /><path d="M558.8 750 L555 762 L562.6 762 Z" fill="#e11414"/><path d="M558.8 887 L558.8 903 L574.4 912 Z" fill="none" stroke="#e11414" stroke-width="1.2"/><path d="M562 892 L562 905 M565 897 L565 907 M568 902 L568 909 M571 907 L571 910" stroke="#e11414" stroke-width="1"/><path d="M558.8 887 L574.4 912" stroke="#e6e600" stroke-width="1.3" fill="none" /><path d="M567.4 891 L711 808.3" stroke="#1e1ee6" stroke-width="1.3" stroke-dasharray="6 2 1.5 2" fill="none"/><path d="M555.6 549.6 L561.7 545.4 L563.7 555.4 L554.3 560.5 L555.6 549.6" stroke="#1ed21e" stroke-width="1.3" fill="none" /><path d="M570.5 558.4 L570.5 565.5" stroke="#1ed21e" stroke-width="1.3" fill="none" /><path d="M556 582 L562 578.5" stroke="#1ed21e" stroke-width="1.3" fill="none" /><path d="M715.5 307.5 L721.8 304.1" stroke="#1ed21e" stroke-width="1.3" fill="none" /><rect x="726" y="298" width="4" height="8.5" rx="2" stroke="#1ed21e" stroke-width="1.2" fill="none" transform="rotate(-10 728 302)"/><path d="M731 302.7 L737.7 299 L737.7 312.4 L731 302.7" stroke="#1ed21e" stroke-width="1.3" fill="none" /><path d="M867 379 L867 385.5" stroke="#1ed21e" stroke-width="1.4" fill="none" /><path d="M867 387.5 L867 394" stroke="#1ed21e" stroke-width="1.4" fill="none" /><path d="M696.5 639.5 A4.3 4.3 0 1 0 697 647.5" stroke="#1ed21e" stroke-width="1.5" fill="none"/><path d="M709.5 649 L709.5 656" stroke="#1ed21e" stroke-width="1.3" fill="none" /><path d="M716 649 L721 646" stroke="#1ed21e" stroke-width="1.3" fill="none" /><path d="M649 586.7 L662.5 578.5 L701.5 601.6 L688 609 L649 586.7 L649 673.4 L688 695.8 L701.5 688.3 L701.5 601.6" stroke="#14c8dc" stroke-width="1.3" fill="none" /><path d="M688 609 L688 695.8" stroke="#14c8dc" stroke-width="1.3" fill="none" /><path d="M649 605.6 L688 627.3 L701.5 620.5" stroke="#14c8dc" stroke-width="1.3" fill="none" /><ellipse cx="656.5" cy="600" rx="3.6" ry="4.6" transform="rotate(-20 656.5 600)" stroke="#14c8dc" stroke-width="1.2" fill="none"/><ellipse cx="668.3" cy="607.3" rx="4.6" ry="5.8" transform="rotate(-20 668.3 607.3)" stroke="#14c8dc" stroke-width="1.2" fill="none"/><ellipse cx="680.5" cy="614.8" rx="3.5" ry="4.4" transform="rotate(-20 680.5 614.8)" stroke="#14c8dc" stroke-width="1.2" fill="none"/><path d="M661.6 618.7 L671 631 L663.5 637 Z M667 628 L680.5 622.5 L680.5 643 L670 639 M668.5 641 L668.5 650 M674 634 L689 643 M665 630 L676 637" stroke="#d21ed2" stroke-width="1.1" fill="none" stroke-dasharray="2.2 1.3"/><ellipse cx="224.5" cy="236.9" rx="17.4" ry="11.6" stroke="#1ed21e" stroke-width="1.4" fill="none"/><path d="M224.5 213 L224.5 225.3" stroke="#1ed21e" stroke-width="1.3" fill="none" /><path d="M224.5 248.5 L224.5 260.5" stroke="#1ed21e" stroke-width="1.3" fill="none" /><path d="M200 250.6 L210.5 245" stroke="#1ed21e" stroke-width="1.3" fill="none" /><path d="M238.5 245 L249 250.6" stroke="#1ed21e" stroke-width="1.3" fill="none" /><path d="M233.5 226 L243 215.5" stroke="#1ed21e" stroke-width="1.3" fill="none" /><path d="M241.5 212 L256 204.5 L249.5 216.5 Z" fill="#f2f2f2" stroke="#1ed21e" stroke-width="1.1"/><path d="M234 208 Q249 217 253.5 234.8" stroke="#e11414" stroke-width="1.3" fill="none"/><circle cx="240" cy="212" r="1.5" fill="#e11414"/><circle cx="251" cy="228" r="1.5" fill="#e11414"/><path d="M239 229.5 L256 220" stroke="#14c8dc" stroke-width="1.3" fill="none" /><text x="224.5" y="243" text-anchor="middle" font-family="Liberation Serif" font-weight="bold" font-size="15" fill="#1ed21e">U</text><text x="257" y="222" font-family="Liberation Sans" font-size="7" fill="#f0f0f0" transform="rotate(-30 257 222)">N</text><text x="0" y="0" transform="translate(735.8,272.7) rotate(-30) skewX(-33)" font-family="Liberation Sans" font-size="15" fill="#e2e2e2" textLength="62" lengthAdjust="spacingAndGlyphs" style="white-space:pre" >SWAGE  NIPPLE</text><text x="0" y="0" transform="translate(744.5,284.3) rotate(-30) skewX(-33)" font-family="Liberation Sans" font-size="15" fill="#e2e2e2" textLength="42" lengthAdjust="spacingAndGlyphs" style="white-space:pre" >3"x1  1/2"</text><text x="0" y="0" transform="translate(481.2,585.5) rotate(-30) skewX(-33)" font-family="Liberation Sans" font-size="15" fill="#e2e2e2" textLength="72" lengthAdjust="spacingAndGlyphs" style="white-space:pre" >CON.  RED.  4"x3"</text><text x="0" y="0" transform="translate(604,587) rotate(-30) skewX(-33)" font-family="Liberation Sans" font-size="15" fill="#e2e2e2" textLength="72" lengthAdjust="spacingAndGlyphs" style="white-space:pre" >TEE  RED.  4"x3"</text><text x="0" y="0" transform="translate(638,514) rotate(-30) skewX(-33)" font-family="Liberation Sans" font-size="15" fill="#e2e2e2" textLength="38" lengthAdjust="spacingAndGlyphs" style="white-space:pre" >PIPE  ø3"</text><text x="0" y="0" transform="translate(524,510) rotate(-30) skewX(-33)" font-family="Liberation Sans" font-size="14" fill="#1ed21e" textLength="137" lengthAdjust="spacingAndGlyphs" style="white-space:pre" >CONT.  SEE  DWG.  NO.  PP-016</text><text x="0" y="0" transform="translate(607,860) rotate(-30) skewX(-33)" font-family="Liberation Sans" font-size="15" fill="#1ed21e" textLength="53" lengthAdjust="spacingAndGlyphs" style="white-space:pre" >LANTAI  SATU</text><text x="0" y="0" transform="translate(546.5,975) rotate(-30) skewX(-33)" font-family="Liberation Sans" font-size="13.5" fill="#1ed21e" textLength="137" lengthAdjust="spacingAndGlyphs" style="white-space:pre" >CONT.  SEE  DWG.  NO.  PP-014</text><text x="0" y="0" transform="translate(899.6,398.7) rotate(30) skewX(28)" font-family="Liberation Sans" font-size="14.5" fill="#e2e2e2" textLength="56" lengthAdjust="spacingAndGlyphs" style="white-space:pre" >℄  EL.+8350</text><text x="0" y="0" transform="translate(663,656) rotate(30) skewX(28)" font-family="Liberation Sans" font-size="13" fill="#e2e2e2" textLength="20" lengthAdjust="spacingAndGlyphs" style="white-space:pre" >WALL</text><text x="0" y="0" transform="translate(651,669) rotate(30) skewX(28)" font-family="Liberation Sans" font-size="13" fill="#e2e2e2" textLength="39" lengthAdjust="spacingAndGlyphs" style="white-space:pre" >HYDRANT</text><text x="0" y="0" transform="translate(715,393) rotate(-90) skewX(-20)" font-family="Liberation Sans" font-size="12" fill="#e2e2e2" textLength="38" lengthAdjust="spacingAndGlyphs" style="white-space:pre" >ø1  1/2"</text><text x="0" y="0" transform="translate(554,664) rotate(-90) skewX(-20)" font-family="Liberation Sans" font-size="12" fill="#e2e2e2" textLength="14" lengthAdjust="spacingAndGlyphs" style="white-space:pre" >ø4"</text></svg><div style="position:absolute;left:632px;top:904px;width:697px;height:28px;background:rgba(88,88,88,0.88);border-radius:2px;z-index:6"></div><div style="position:absolute;left:632px;top:938.5px;width:59px;height:15px;background:rgba(88,88,88,0.92);border-radius:2px;z-index:6"></div><div style="position:absolute;left:632px;top:958.5px;width:59px;height:15px;background:rgba(88,88,88,0.92);border-radius:2px;z-index:6"></div><div style="position:absolute;left:573px;top:976.5px;width:776px;height:26px;background:#4a4a4a;border:1px solid #333;box-sizing:border-box;z-index:6"></div><div style="position:absolute;left:626px;top:977.5px;width:722px;height:24px;background:#c4c4c4;z-index:7"></div><svg style="left:0;top:0;z-index:9" width="1919" height="1034"><path d="M577 982 v15 M580 982 v15" stroke="#8a8a8a" stroke-width="1.2" stroke-dasharray="1.5 1.5"/><path d="M588 985 L596 993 M596 985 L588 993" stroke="#e0e0e0" stroke-width="1.6"/><path d="M609 993 L615 987 M614 984 a3.5 3.5 0 1 0 4 4 l-2 -0 l-2 -2 Z" stroke="#e0e0e0" stroke-width="1.6" fill="#e0e0e0"/><rect x="632.5" y="982.5" width="14" height="12" fill="#d8d8d8" stroke="#666"/><path d="M635 985 l3 2.5 l-3 2.5 M639 991.5 h4" stroke="#333" stroke-width="1" fill="none"/><path d="M650 987 h5 l-2.5 3 Z" fill="#555"/><path d="M1336 992 h8 l-4 -4 Z" fill="#222"/></svg><svg style="left:0;top:0;z-index:3" width="1919" height="1034"><circle cx="1829.2" cy="279" r="53.6" stroke="#4c5055" stroke-width="14" fill="none"/><rect x="1803.5" y="253" width="51" height="52" fill="#b9b9b9"/><rect x="1813" y="262.5" width="32" height="32" fill="#a4a7aa"/><text x="1829" y="285" text-anchor="middle" font-family="Liberation Sans" font-weight="bold" font-size="15" fill="#55585c" textLength="22" lengthAdjust="spacingAndGlyphs">TOP</text><text x="1829" y="231.5" text-anchor="middle" font-family="Liberation Sans" font-weight="bold" font-size="21" fill="#b8b8b8">N</text><text x="1884.7" y="287.7" text-anchor="middle" font-family="Liberation Sans" font-weight="bold" font-size="21" fill="#b8b8b8">E</text><text x="1829" y="344" text-anchor="middle" font-family="Liberation Sans" font-weight="bold" font-size="21" fill="#b8b8b8">S</text><text x="1773" y="287.7" text-anchor="middle" font-family="Liberation Sans" font-weight="bold" font-size="21" fill="#b8b8b8">W</text><rect x="1806.5" y="367" width="45" height="15" rx="5" fill="#8c8c8c" stroke="#a8a8a8"/><text x="1809" y="378.5" font-family="Liberation Sans" font-size="10" fill="#4a4a4a">WCS</text><path d="M1838 373 h6 l-3 3.5 Z" fill="none" stroke="#5a5a5a" stroke-width="0.8"/><rect x="1876.5" y="409" width="31" height="212" rx="3" fill="#575b60" stroke="#6a6e72" stroke-dasharray="1 1"/><circle cx="1902" cy="414" r="3" fill="none" stroke="#7a7d80"/><circle cx="1902" cy="616" r="3" fill="none" stroke="#7a7d80"/><circle cx="1891.5" cy="439" r="10" fill="none" stroke="#7a7d80" stroke-width="1.6"/><circle cx="1891.5" cy="439" r="6" fill="none" stroke="#7a7d80" stroke-width="1.2"/><path d="M1889 457 h5 l-2.5 2.5Z" fill="#7a7d80"/><path d="M1884 478 v8 q0 8 7 8 q8 0 9 -7 l3 -6 q-2 -1 -4 2 v-8 q-2 -1 -3 1 v-4 q-2 -1 -3 1 v-2 q-2 -1 -3 1 v5 q-2 -1 -3 1Z" fill="none" stroke="#7a7d80" stroke-width="1.3"/><path d="M1882 500 l18 18 M1900 500 l-18 18 M1882 500 h4 M1882 500 v4" stroke="#7a7d80" stroke-width="1.3"/><circle cx="1897" cy="514" r="4" fill="#575b60" stroke="#7a7d80" stroke-width="1.3"/><path d="M1889 527 h5 l-2.5 2.5Z" fill="#7a7d80"/><path d="M1891.5 536 v22 M1888 540 l3.5 -4 l3.5 4" stroke="#7a7d80" stroke-width="1.3" fill="none"/><ellipse cx="1891.5" cy="549" rx="10" ry="4" fill="none" stroke="#7a7d80" stroke-width="1.3"/><path d="M1889 571 h5 l-2.5 2.5Z" fill="#7a7d80"/><path d="M1881.5 579.5 h6 v5 h-6Z M1888.5 579.5 h6 v5 h-6Z M1895.5 579.5 h6 v5 h-6Z M1881.5 587.5 h20 v14 h-20Z" fill="none" stroke="#7a7d80"/><path d="M1887 590 l8 4.5 l-8 4.5Z" fill="#7a7d80"/><path d="M1851 190.5 h10" stroke="#f0f0f0" stroke-width="2.5"/><path d="M1871.5 186.5 h6 v6 h-6Z M1873.5 184.5 h6 v6" stroke="#f0f0f0" stroke-width="1.5" fill="none"/><path d="M1891.5 184.5 L1899 192 M1899 184.5 L1891.5 192" stroke="#f0f0f0" stroke-width="2"/></svg><div style="position:absolute;left:1912px;top:173px;width:7px;height:830px;background:#dde5ee"></div><div style="position:absolute;left:0px;top:1003px;width:1919px;height:1px;background:#575757"></div><div style="position:absolute;left:0px;top:1031px;width:1919px;height:1px;background:#505050"></div><svg style="left:0;top:0;z-index:2" width="1919" height="1034"><path d="M8 1003.5 L73 1003.5 L67 1018 Q66 1021 62 1021 L22 1021 Q18 1021 17 1018 Z" fill="#707070" stroke="#555"/><path d="M70 1003.5 L137 1003.5 L131 1018 Q130 1021 126 1021 L78 1021 Q74 1021 73 1018 Z" fill="#575757" stroke="#4a4a4a"/><path d="M139 1003.5 L161 1003.5 L156 1016 Q154 1020 149 1020 L139 1020 Z" fill="#484848"/><path d="M150 1007 v10 M145 1012 h10" stroke="#cfcfcf" stroke-width="2"/><rect x="711" y="1004" width="1208" height="27" fill="#3d3d3d"/><rect x="712.5" y="1004.5" width="140" height="25" fill="#484848" stroke="#626262"/><rect x="855.5" y="1004.5" width="47" height="25" fill="#484848" stroke="#626262"/><rect x="905.5" y="1004.5" width="63" height="25" fill="#484848" stroke="#626262"/><rect x="971.5" y="1004.5" width="151" height="25" fill="#484848" stroke="#626262"/><rect x="1125.5" y="1004.5" width="61" height="25" fill="#484848" stroke="#626262"/><rect x="1189.5" y="1004.5" width="73" height="25" fill="#484848" stroke="#626262"/><rect x="1265.5" y="1004.5" width="38" height="25" fill="#484848" stroke="#626262"/><rect x="1306.5" y="1004.5" width="101" height="25" fill="#484848" stroke="#626262"/><rect x="1410.5" y="1004.5" width="145" height="25" fill="#484848" stroke="#626262"/><rect x="1558.5" y="1004.5" width="39" height="25" fill="#484848" stroke="#626262"/><rect x="1600.5" y="1004.5" width="22" height="25" fill="#484848" stroke="#626262"/><rect x="1625.5" y="1004.5" width="96" height="25" fill="#484848" stroke="#626262"/><rect x="1724.5" y="1004.5" width="23" height="25" fill="#484848" stroke="#626262"/><rect x="1750.5" y="1004.5" width="39" height="25" fill="#484848" stroke="#626262"/><rect x="1792.5" y="1004.5" width="21" height="25" fill="#484848" stroke="#626262"/><rect x="1816.5" y="1004.5" width="26" height="25" fill="#484848" stroke="#626262"/><rect x="1845.5" y="1004.5" width="22" height="25" fill="#484848" stroke="#626262"/><rect x="1870.5" y="1004.5" width="48" height="25" fill="#484848" stroke="#626262"/><rect x="998" y="1005.5" width="21" height="23" fill="#5b8dc9"/><rect x="1126" y="1005.5" width="22" height="23" fill="#5b8dc9"/><rect x="1150" y="1005.5" width="22" height="23" fill="#5b8dc9"/><rect x="1215" y="1005.5" width="22" height="23" fill="#5b8dc9"/><rect x="1307" y="1005.5" width="22" height="23" fill="#5b8dc9"/><rect x="1370" y="1005.5" width="22" height="23" fill="#5b8dc9"/><rect x="1412" y="1005.5" width="22" height="23" fill="#5b8dc9"/><rect x="1819" y="1005.5" width="22" height="23" fill="#5b8dc9"/><path d="M909 1011.5 h15 M909 1016 h15 M909 1020.5 h15 M912.5 1008 v16 M917 1008 v16 M921.5 1008 v16" stroke="#e4e4e4" stroke-width="1.2" fill="none"/><path d="M936 1011 h2 v2 h-2Z" fill="#e4e4e4"/><path d="M936 1016 h2 v2 h-2Z" fill="#e4e4e4"/><path d="M936 1021 h2 v2 h-2Z" fill="#e4e4e4"/><path d="M941 1011 h2 v2 h-2Z" fill="#e4e4e4"/><path d="M941 1016 h2 v2 h-2Z" fill="#e4e4e4"/><path d="M941 1021 h2 v2 h-2Z" fill="#e4e4e4"/><path d="M946 1011 h2 v2 h-2Z" fill="#e4e4e4"/><path d="M946 1016 h2 v2 h-2Z" fill="#e4e4e4"/><path d="M946 1021 h2 v2 h-2Z" fill="#e4e4e4"/><path d="M957 1014.5 h8 l-4 4 Z" fill="#e4e4e4"/><path d="M1073 1014.5 h8 l-4 4 Z" fill="#e4e4e4"/><path d="M1112 1014.5 h8 l-4 4 Z" fill="#e4e4e4"/><path d="M1177 1014.5 h8 l-4 4 Z" fill="#e4e4e4"/><path d="M1292 1014.5 h8 l-4 4 Z" fill="#e4e4e4"/><path d="M1357 1014.5 h8 l-4 4 Z" fill="#e4e4e4"/><path d="M1396 1014.5 h8 l-4 4 Z" fill="#e4e4e4"/><path d="M1545 1014.5 h8 l-4 4 Z" fill="#e4e4e4"/><path d="M1586 1014.5 h8 l-4 4 Z" fill="#e4e4e4"/><path d="M1712 1014.5 h8 l-4 4 Z" fill="#e4e4e4"/><path d="M1779 1014.5 h8 l-4 4 Z" fill="#e4e4e4"/><path d="M975 1017 h5 v6 h-5Z" fill="#e4e4e4"/><path d="M978 1017 v-7 h3 M983 1009 h6 v5 h-6Z" stroke="#e4e4e4" stroke-width="1.2" fill="none"/><path d="M1002 1013 h6 M1005 1010 v6" stroke="#e4e4e4" stroke-width="1.5" fill="none"/><path d="M1006 1018 h10 v4 h-10Z" fill="#e4e4e4"/><path d="M1025 1008 v15 h14" stroke="#e4e4e4" stroke-width="1.3" fill="none"/><path d="M1028 1016 v4 h4" stroke="#e4e4e4" stroke-width="1" fill="none"/><circle cx="1057" cy="1017" r="6" fill="none" stroke="#e4e4e4" stroke-width="1.3"/><path d="M1052 1021 l12 -11" stroke="#e4e4e4" stroke-width="1.2" fill="none"/><path d="M1090 1023 l14 -14" stroke="#e07040" stroke-width="1.2" fill="none"/><path d="M1097 1009 v14" stroke="#8fd08f" stroke-width="1.2" fill="none"/><circle cx="1097" cy="1016" r="1.8" fill="none" stroke="#e4e4e4"/><path d="M1130 1023 h14 M1131 1023 l10 -10" stroke="#e4e4e4" stroke-width="1.5" fill="none"/><path d="M1155.5 1012.5 h13 v13 h-13Z" stroke="#e4e4e4" stroke-width="1.4" fill="none"/><path d="M1153 1008 h5 v5 h-5Z" fill="#fff"/><path d="M1195 1011 h14 M1195 1016 h14 M1195 1021 h14" stroke="#e4e4e4" stroke-width="2.5" fill="none"/><rect x="1219" y="1009" width="14" height="14" fill="#fff"/><rect x="1219.0" y="1009.0" width="3.5" height="3.5" fill="#5b8dc9"/><rect x="1219.0" y="1016.0" width="3.5" height="3.5" fill="#5b8dc9"/><rect x="1222.5" y="1012.5" width="3.5" height="3.5" fill="#5b8dc9"/><rect x="1222.5" y="1019.5" width="3.5" height="3.5" fill="#5b8dc9"/><rect x="1226.0" y="1009.0" width="3.5" height="3.5" fill="#5b8dc9"/><rect x="1226.0" y="1016.0" width="3.5" height="3.5" fill="#5b8dc9"/><rect x="1229.5" y="1012.5" width="3.5" height="3.5" fill="#5b8dc9"/><rect x="1229.5" y="1019.5" width="3.5" height="3.5" fill="#5b8dc9"/><path d="M1246 1014 h12 v10 h-12Z" fill="#90d8a0"/><path d="M1243 1009 h6 M1246 1006 v6" stroke="#e4e4e4" stroke-width="1.1" fill="none"/><path d="M1272 1013 l4 -4 h10 v10 l-4 4 h-10Z M1272 1013 h10 v10 M1282 1013 l4 -4" stroke="#e4e4e4" stroke-width="1.1" fill="none"/><path d="M1270 1019 h4 v4 h-4Z" stroke="#f0a040" stroke-width="1" fill="none"/><path d="M1311 1008 v15 h15" stroke="#e4e4e4" stroke-width="1.6" fill="none"/><path d="M1318 1008 l-3 6 h3 l-2 5 l5 -7 h-3 l2 -4Z" fill="#fff"/><path d="M1337 1012 l4 -4 h9 v9 l-4 4 h-9Z M1337 1012 h9 v9 M1346 1012 l4 -4" stroke="#e4e4e4" stroke-width="1.1" fill="none"/><path d="M1375 1013 l6 -4 l6 4 v8 l-6 4 l-6 -4Z M1381 1017 v8 M1381 1017 l6 -4 M1381 1017 l-6 -4" stroke="#fff" stroke-width="1.3" fill="none"/><path d="M1416 1024 l7 -16 l7 16 l-4 -3 l-3 3 l-3 -3Z" fill="#fff"/><circle cx="1430" cy="1011" r="3" fill="none" stroke="#fff"/><path d="M1440 1024 l7 -16 l7 16 l-4 -3 l-3 3 l-3 -3Z" fill="#cfcfcf"/><path d="M1453 1008 l-3 5 h3 l-2 5 l5 -6 h-3 l2 -4Z" fill="#cfcfcf"/><path d="M1463 1024 l7 -16 l7 16 l-4 -3 l-3 3 l-3 -3Z" fill="#cfcfcf"/><circle cx="1570" cy="1016.5" r="5.5" fill="none" stroke="#e4e4e4" stroke-width="3" stroke-dasharray="2.5 1.8"/><circle cx="1570" cy="1016.5" r="4" fill="#e4e4e4"/><circle cx="1570" cy="1016.5" r="1.8" fill="#484848"/><path d="M1611 1009 v15 M1603.5 1016.5 h15" stroke="#e4e4e4" stroke-width="1.8" fill="none"/><path d="M1635 1009 h6 v15 h-6Z" fill="#d0d0d0"/><path d="M1638 1011 h3 M1638 1014 h3 M1638 1017 h3 M1638 1020 h3" stroke="#484848" stroke-width="1" fill="none"/><path d="M1730.5 1009.5 h11 v14 h-11Z M1733 1013 h1 M1736 1013 h4 M1733 1016.5 h1 M1736 1016.5 h4 M1733 1020 h1 M1736 1020 h4" stroke="#e4e4e4" stroke-width="1.1" fill="none"/><path d="M1754.5 1009.5 h14 v11 h-14Z M1754.5 1012.5 h14" stroke="#e4e4e4" stroke-width="1.1" fill="none"/><rect x="1765" y="1017" width="6" height="5" fill="#484848" stroke="#e4e4e4"/><path d="M1797.5 1008.5 h6 v6 h-6Z M1806 1011 m-3 0 a3 3 0 1 0 6 0 a3 3 0 1 0 -6 0 M1798 1024 l3.5 -6 l3.5 6Z" stroke="#e4e4e4" stroke-width="1" fill="none"/><circle cx="1830" cy="1016.5" r="8" fill="none" stroke="#fff" stroke-width="1.2"/><path d="M1826 1021 l8 -8" stroke="#fff" stroke-width="1.4"/><path d="M1849 1009 h8 v9 h-8Z" fill="#e0e0e0"/><path d="M1849 1018 h10 v6 h-10Z" fill="#e8d040"/><path d="M1852 1011 h4 v4 h-4Z" fill="#5b8dc9"/><path d="M1857 1021 l2 2 l4 -5" stroke="#40c040" stroke-width="1.4" fill="none"/><path d="M1874.5 1009.5 h16 v14 h-16Z M1878 1020 l4 -4 M1878 1020 v-3 M1878 1020 h3 M1887 1013 l-4 4 M1887 1013 v3 M1887 1013 h-3" stroke="#e4e4e4" stroke-width="1.1" fill="none"/><path d="M1899 1010.5 h16 M1899 1016.5 h16 M1899 1022.5 h16" stroke="#e4e4e4" stroke-width="1.8" fill="none"/></svg><div id="tx0" class="t" style="position:absolute;left:55px;top:29.59px;font-family:'Liberation Sans', sans-serif;font-size:12px;line-height:12px;white-space:pre;color:#f0f0f0;transform:scaleX(1.031);transform-origin:0 0;z-index:2">Home</div><div id="tx1" class="t" style="position:absolute;left:108px;top:29.59px;font-family:'Liberation Sans', sans-serif;font-size:12px;line-height:12px;white-space:pre;color:#e0e0e0;transform:scaleX(0.966);transform-origin:0 0;z-index:2">Insert</div><div id="tx2" class="t" style="position:absolute;left:157px;top:29.59px;font-family:'Liberation Sans', sans-serif;font-size:12px;line-height:12px;white-space:pre;color:#e0e0e0;transform:scaleX(1.020);transform-origin:0 0;z-index:2">Annotate</div><div id="tx3" class="t" style="position:absolute;left:226.3px;top:29.59px;font-family:'Liberation Sans', sans-serif;font-size:12px;line-height:12px;white-space:pre;color:#e0e0e0;transform:scaleX(0.969);transform-origin:0 0;z-index:2">Parametric</div><div id="tx4" class="t" style="position:absolute;left:303px;top:29.59px;font-family:'Liberation Sans', sans-serif;font-size:12px;line-height:12px;white-space:pre;color:#e0e0e0;transform:scaleX(0.950);transform-origin:0 0;z-index:2">View</div><div id="tx5" class="t" style="position:absolute;left:348px;top:29.59px;font-family:'Liberation Sans', sans-serif;font-size:12px;line-height:12px;white-space:pre;color:#e0e0e0;transform:scaleX(0.987);transform-origin:0 0;z-index:2">Manage</div><div id="tx6" class="t" style="position:absolute;left:411.3px;top:29.59px;font-family:'Liberation Sans', sans-serif;font-size:12px;line-height:12px;white-space:pre;color:#e0e0e0;transform:scaleX(1.041);transform-origin:0 0;z-index:2">Output</div><div id="tx7" class="t" style="position:absolute;left:469px;top:29.59px;font-family:'Liberation Sans', sans-serif;font-size:12px;line-height:12px;white-space:pre;color:#e0e0e0;transform:scaleX(1.027);transform-origin:0 0;z-index:2">Add-ins</div><div id="tx8" class="t" style="position:absolute;left:531.6px;top:29.59px;font-family:'Liberation Sans', sans-serif;font-size:12px;line-height:12px;white-space:pre;color:#e0e0e0;transform:scaleX(0.984);transform-origin:0 0;z-index:2">Collaborate</div><div id="tx9" class="t" style="position:absolute;left:612.4px;top:29.59px;font-family:'Liberation Sans', sans-serif;font-size:12px;line-height:12px;white-space:pre;color:#e0e0e0;transform:scaleX(0.968);transform-origin:0 0;z-index:2">Featured Apps</div><div id="tx10" class="t" style="position:absolute;left:708.3px;top:29.59px;font-family:'Liberation Sans', sans-serif;font-size:12px;line-height:12px;white-space:pre;color:#e0e0e0;transform:scaleX(0.924);transform-origin:0 0;z-index:2">Express Tools</div><div id="tx11" class="t" style="position:absolute;left:92.9921875px;top:126.59px;font-family:'Liberation Sans', sans-serif;font-size:12px;line-height:12px;white-space:pre;color:#e6e6e6;">Draw</div><div id="tx12" class="t" style="position:absolute;left:326.328125px;top:126.59px;font-family:'Liberation Sans', sans-serif;font-size:12px;line-height:12px;white-space:pre;color:#e6e6e6;">Modify</div><div id="tx13" class="t" style="position:absolute;left:534.3046875px;top:126.59px;font-family:'Liberation Sans', sans-serif;font-size:12px;line-height:12px;white-space:pre;color:#e6e6e6;">Annotation</div><div id="tx14" class="t" style="position:absolute;left:776.984375px;top:126.59px;font-family:'Liberation Sans', sans-serif;font-size:12px;line-height:12px;white-space:pre;color:#e6e6e6;">Layers</div><div id="tx15" class="t" style="position:absolute;left:997.328125px;top:126.59px;font-family:'Liberation Sans', sans-serif;font-size:12px;line-height:12px;white-space:pre;color:#e6e6e6;">Block</div><div id="tx16" class="t" style="position:absolute;left:1190.6484375px;top:126.59px;font-family:'Liberation Sans', sans-serif;font-size:12px;line-height:12px;white-space:pre;color:#e6e6e6;">Properties</div><div id="tx17" class="t" style="position:absolute;left:1371.3203125px;top:126.59px;font-family:'Liberation Sans', sans-serif;font-size:12px;line-height:12px;white-space:pre;color:#e6e6e6;">Groups</div><div id="tx18" class="t" style="position:absolute;left:1454.6640625px;top:126.59px;font-family:'Liberation Sans', sans-serif;font-size:12px;line-height:12px;white-space:pre;color:#e6e6e6;">Utilities</div><div id="tx19" class="t" style="position:absolute;left:1544.3125px;top:126.59px;font-family:'Liberation Sans', sans-serif;font-size:12px;line-height:12px;white-space:pre;color:#e6e6e6;">Clipboard</div><div id="tx20" class="t" style="position:absolute;left:1615.1015625px;top:126.59px;font-family:'Liberation Sans', sans-serif;font-size:12px;line-height:12px;white-space:pre;color:#e6e6e6;">View</div><div id="tx21" class="t" style="position:absolute;left:11.65625px;top:88.59px;font-family:'Liberation Sans', sans-serif;font-size:12px;line-height:12px;white-space:pre;color:#e6e6e6;">Line</div><div id="tx22" class="t" style="position:absolute;left:44.984375px;top:88.59px;font-family:'Liberation Sans', sans-serif;font-size:12px;line-height:12px;white-space:pre;color:#e6e6e6;">Polyline</div><div id="tx23" class="t" style="position:absolute;left:100.6640625px;top:88.59px;font-family:'Liberation Sans', sans-serif;font-size:12px;line-height:12px;white-space:pre;color:#e6e6e6;">Circle</div><div id="tx24" class="t" style="position:absolute;left:152.0px;top:88.59px;font-family:'Liberation Sans', sans-serif;font-size:12px;line-height:12px;white-space:pre;color:#e6e6e6;">Arc</div><div id="tx25" class="t" style="position:absolute;left:254px;top:54.59px;font-family:'Liberation Sans', sans-serif;font-size:12px;line-height:12px;white-space:pre;color:#e6e6e6;">Move</div><div id="tx26" class="t" style="position:absolute;left:254px;top:78.59px;font-family:'Liberation Sans', sans-serif;font-size:12px;line-height:12px;white-space:pre;color:#e6e6e6;">Copy</div><div id="tx27" class="t" style="position:absolute;left:254px;top:102.59px;font-family:'Liberation Sans', sans-serif;font-size:12px;line-height:12px;white-space:pre;color:#e6e6e6;">Stretch</div><div id="tx28" class="t" style="position:absolute;left:326px;top:54.59px;font-family:'Liberation Sans', sans-serif;font-size:12px;line-height:12px;white-space:pre;color:#e6e6e6;">Rotate</div><div id="tx29" class="t" style="position:absolute;left:326px;top:78.59px;font-family:'Liberation Sans', sans-serif;font-size:12px;line-height:12px;white-space:pre;color:#e6e6e6;">Mirror</div><div id="tx30" class="t" style="position:absolute;left:326px;top:102.59px;font-family:'Liberation Sans', sans-serif;font-size:12px;line-height:12px;white-space:pre;color:#e6e6e6;">Scale</div><div id="tx31" class="t" style="position:absolute;left:396px;top:54.59px;font-family:'Liberation Sans', sans-serif;font-size:12px;line-height:12px;white-space:pre;color:#e6e6e6;">Trim</div><div id="tx32" class="t" style="position:absolute;left:396px;top:78.59px;font-family:'Liberation Sans', sans-serif;font-size:12px;line-height:12px;white-space:pre;color:#e6e6e6;">Fillet</div><div id="tx33" class="t" style="position:absolute;left:396px;top:102.59px;font-family:'Liberation Sans', sans-serif;font-size:12px;line-height:12px;white-space:pre;color:#e6e6e6;">Array</div><div id="tx34" class="t" style="position:absolute;left:487.9921875px;top:88.59px;font-family:'Liberation Sans', sans-serif;font-size:12px;line-height:12px;white-space:pre;color:#e6e6e6;">Text</div><div id="tx35" class="t" style="position:absolute;left:523.6484375px;top:88.59px;font-family:'Liberation Sans', sans-serif;font-size:12px;line-height:12px;white-space:pre;color:#e6e6e6;">Dimension</div><div id="tx36" class="t" style="position:absolute;left:610px;top:54.59px;font-family:'Liberation Sans', sans-serif;font-size:12px;line-height:12px;white-space:pre;color:#e6e6e6;">Linear</div><div id="tx37" class="t" style="position:absolute;left:610px;top:78.59px;font-family:'Liberation Sans', sans-serif;font-size:12px;line-height:12px;white-space:pre;color:#e6e6e6;">Leader</div><div id="tx38" class="t" style="position:absolute;left:610px;top:102.59px;font-family:'Liberation Sans', sans-serif;font-size:12px;line-height:12px;white-space:pre;color:#e6e6e6;">Table</div><div id="tx39" class="t" style="position:absolute;left:681.984375px;top:88.59px;font-family:'Liberation Sans', sans-serif;font-size:12px;line-height:12px;white-space:pre;color:#e6e6e6;">Layer</div><div id="tx40" class="t" style="position:absolute;left:669.6484375px;top:103.59px;font-family:'Liberation Sans', sans-serif;font-size:12px;line-height:12px;white-space:pre;color:#e6e6e6;">Properties</div><div id="tx41" class="t" style="position:absolute;left:810px;top:54.59px;font-family:'Liberation Sans', sans-serif;font-size:12px;line-height:12px;white-space:pre;color:#e6e6e6;">2</div><div id="tx42" class="t" style="position:absolute;left:848px;top:78.59px;font-family:'Liberation Sans', sans-serif;font-size:12px;line-height:12px;white-space:pre;color:#e6e6e6;">Make Current</div><div id="tx43" class="t" style="position:absolute;left:848px;top:102.59px;font-family:'Liberation Sans', sans-serif;font-size:12px;line-height:12px;white-space:pre;color:#e6e6e6;">Match Layer</div><div id="tx44" class="t" style="position:absolute;left:943.9921875px;top:88.59px;font-family:'Liberation Sans', sans-serif;font-size:12px;line-height:12px;white-space:pre;color:#e6e6e6;">Insert</div><div id="tx45" class="t" style="position:absolute;left:1004px;top:54.59px;font-family:'Liberation Sans', sans-serif;font-size:12px;line-height:12px;white-space:pre;color:#e6e6e6;">Create</div><div id="tx46" class="t" style="position:absolute;left:1004px;top:78.59px;font-family:'Liberation Sans', sans-serif;font-size:12px;line-height:12px;white-space:pre;color:#e6e6e6;">Edit</div><div id="tx47" class="t" style="position:absolute;left:1004px;top:102.59px;font-family:'Liberation Sans', sans-serif;font-size:12px;line-height:12px;white-space:pre;color:#e6e6e6;">Edit Attributes</div><div id="tx48" class="t" style="position:absolute;left:1113.65625px;top:88.59px;font-family:'Liberation Sans', sans-serif;font-size:12px;line-height:12px;white-space:pre;color:#e6e6e6;">Match</div><div id="tx49" class="t" style="position:absolute;left:1102.6484375px;top:103.59px;font-family:'Liberation Sans', sans-serif;font-size:12px;line-height:12px;white-space:pre;color:#e6e6e6;">Properties</div><div id="tx50" class="t" style="position:absolute;left:1220px;top:54.59px;font-family:'Liberation Sans', sans-serif;font-size:12px;line-height:12px;white-space:pre;color:#e6e6e6;">ByLayer</div><div id="tx51" class="t" style="position:absolute;left:1251px;top:77.59px;font-family:'Liberation Sans', sans-serif;font-size:12px;line-height:12px;white-space:pre;color:#e6e6e6;">ByLayer</div><div id="tx52" class="t" style="position:absolute;left:1251px;top:101.59px;font-family:'Liberation Sans', sans-serif;font-size:12px;line-height:12px;white-space:pre;color:#e6e6e6;">ByLayer</div><div id="tx53" class="t" style="position:absolute;left:1368.3203125px;top:88.59px;font-family:'Liberation Sans', sans-serif;font-size:12px;line-height:12px;white-space:pre;color:#e6e6e6;">Group</div><div id="tx54" class="t" style="position:absolute;left:1444.65625px;top:88.59px;font-family:'Liberation Sans', sans-serif;font-size:12px;line-height:12px;white-space:pre;color:#e6e6e6;">Measure</div><div id="tx55" class="t" style="position:absolute;left:1541.65625px;top:88.59px;font-family:'Liberation Sans', sans-serif;font-size:12px;line-height:12px;white-space:pre;color:#e6e6e6;">Paste</div><div id="tx56" class="t" style="position:absolute;left:1627.3203125px;top:88.59px;font-family:'Liberation Sans', sans-serif;font-size:12px;line-height:12px;white-space:pre;color:#e6e6e6;">Base</div><div id="tx57" class="t" style="position:absolute;left:668px;top:5.59px;font-family:'Liberation Sans', sans-serif;font-size:12px;line-height:12px;white-space:pre;color:#0e0e0e;transform:scaleX(0.979);transform-origin:0 0;">Autodesk AutoCAD 2019</div><div id="tx58" class="t" style="position:absolute;left:810px;top:5.59px;font-family:'Liberation Sans', sans-serif;font-size:12px;line-height:12px;white-space:pre;color:#0e0e0e;transform:scaleX(0.913);transform-origin:0 0;">ISOMETRIK AIR HYDRANT LT1.dwg</div><div id="tx59" class="t" style="position:absolute;left:1328px;top:6.71px;font-family:'Liberation Sans', sans-serif;font-size:11px;line-height:11px;white-space:pre;color:#c9c9c9;transform:scaleX(0.950);transform-origin:0 0;font-style:italic">Type a keyword or phrase</div><div id="tx60" class="t" style="position:absolute;left:1553px;top:6.59px;font-family:'Liberation Sans', sans-serif;font-size:12px;line-height:12px;white-space:pre;color:#d8eef5;transform:scaleX(0.937);transform-origin:0 0;">Sign In</div><div id="tx61" class="t" style="position:absolute;left:32px;top:152.59px;font-family:'Liberation Sans', sans-serif;font-size:12px;line-height:12px;white-space:pre;color:#c4c4c4;transform:scaleX(0.947);transform-origin:0 0;z-index:3">Start</div><div id="tx62" class="t" style="position:absolute;left:155px;top:152.59px;font-family:'Liberation Sans', sans-serif;font-size:12px;line-height:12px;white-space:pre;color:#c4c4c4;transform:scaleX(0.909);transform-origin:0 0;z-index:3">INSTALASI SOUND SYSTEM LANTAI DUA*</div><div id="tx63" class="t" style="position:absolute;left:411px;top:152.59px;font-family:'Liberation Sans', sans-serif;font-size:12px;line-height:12px;white-space:pre;color:#c4c4c4;transform:scaleX(0.902);transform-origin:0 0;z-index:3">INSTALASI SOUND SYSTEM LANTAI SATU*</div><div id="tx64" class="t" style="position:absolute;left:670px;top:152.59px;font-family:'Liberation Sans', sans-serif;font-size:12px;line-height:12px;white-space:pre;color:#c4c4c4;transform:scaleX(0.904);transform-origin:0 0;z-index:3">ISOMETRIC PUMP HOUSE</div><div id="tx65" class="t" style="position:absolute;left:846.3px;top:152.59px;font-family:'Liberation Sans', sans-serif;font-size:12px;line-height:12px;white-space:pre;color:#c4c4c4;transform:scaleX(0.885);transform-origin:0 0;z-index:3">ISOMETRIK AIR BERSIH LT.BASEMENT</div><div id="tx66" class="t" style="position:absolute;left:1082.4px;top:152.59px;font-family:'Liberation Sans', sans-serif;font-size:12px;line-height:12px;white-space:pre;color:#c4c4c4;transform:scaleX(0.883);transform-origin:0 0;z-index:3">ISOMETRIK AIR BERSIH LT.DASAR</div><div id="tx67" class="t" style="position:absolute;left:1296.3px;top:152.59px;font-family:'Liberation Sans', sans-serif;font-size:12px;line-height:12px;white-space:pre;color:#c4c4c4;transform:scaleX(0.868);transform-origin:0 0;z-index:3">ISOMETRIK AIR BERSIH LT1</div><div id="tx68" class="t" style="position:absolute;left:1476.3px;top:152.59px;font-family:'Liberation Sans', sans-serif;font-size:12px;line-height:12px;white-space:pre;color:#c4c4c4;transform:scaleX(0.874);transform-origin:0 0;z-index:3">ISOMETRIK AIR BERSIH LT2</div><div id="tx69" class="t" style="position:absolute;left:1656px;top:152.59px;font-family:'Liberation Sans', sans-serif;font-size:12px;line-height:12px;white-space:pre;color:#f2f2f2;transform:scaleX(0.896);transform-origin:0 0;z-index:3">ISOMETRIK AIR HYDRANT LT1</div><div id="tx70" class="t" style="position:absolute;left:4px;top:180.59px;font-family:'Liberation Sans', sans-serif;font-size:12px;line-height:12px;white-space:pre;color:#e6e6e6;transform:scaleX(1.022);transform-origin:0 0;">[−][Top][2D Wireframe]</div><div id="tx71" class="m" style="position:absolute;left:634px;top:904.72px;font-family:'Liberation Mono', monospace;font-size:12px;line-height:12px;white-space:pre;color:#e0e0e0;transform:scaleX(0.971);transform-origin:0 0;z-index:7">Autodesk DWG.  This file is a TrustedDWG last saved by an Autodesk application or Autodesk licensed</div><div id="tx72" class="m" style="position:absolute;left:634px;top:919.72px;font-family:'Liberation Mono', monospace;font-size:12px;line-height:12px;white-space:pre;color:#e0e0e0;transform:scaleX(0.972);transform-origin:0 0;z-index:7">application.</div><div id="tx73" class="m" style="position:absolute;left:634px;top:940.22px;font-family:'Liberation Mono', monospace;font-size:12px;line-height:12px;white-space:pre;color:#e8e8e8;transform:scaleX(0.972);transform-origin:0 0;z-index:7">Command:</div><div id="tx74" class="m" style="position:absolute;left:634px;top:960.22px;font-family:'Liberation Mono', monospace;font-size:12px;line-height:12px;white-space:pre;color:#e8e8e8;transform:scaleX(0.972);transform-origin:0 0;z-index:7">Command:</div><div id="tx75" class="m" style="position:absolute;left:662px;top:983.72px;font-family:'Liberation Mono', monospace;font-size:12px;line-height:12px;white-space:pre;color:#8a8a8a;transform:scaleX(0.972);transform-origin:0 0;font-style:italic;z-index:8">Type a command</div><div id="tx76" class="t" style="position:absolute;left:22.6640625px;top:1005.59px;font-family:'Liberation Sans', sans-serif;font-size:12px;line-height:12px;white-space:pre;color:#ffffff;font-weight:bold;z-index:3">Model</div><div id="tx77" class="t" style="position:absolute;left:80.6484375px;top:1005.59px;font-family:'Liberation Sans', sans-serif;font-size:12px;line-height:12px;white-space:pre;color:#d8d8d8;z-index:3">Layout1</div><div id="tx78" class="t" style="position:absolute;left:758px;top:1009.59px;font-family:'Liberation Sans', sans-serif;font-size:12px;line-height:12px;white-space:pre;color:#ececec;transform:scaleX(0.963);transform-origin:0 0;z-index:3">120131, 53603, 0</div><div id="tx79" class="t" style="position:absolute;left:859.5px;top:1009.59px;font-family:'Liberation Sans', sans-serif;font-size:12px;line-height:12px;white-space:pre;color:#ececec;transform:scaleX(0.937);transform-origin:0 0;z-index:3">MODEL</div><div id="tx80" class="t" style="position:absolute;left:1488px;top:1009.59px;font-family:'Liberation Sans', sans-serif;font-size:12px;line-height:12px;white-space:pre;color:#ececec;transform:scaleX(0.924);transform-origin:0 0;z-index:3">1:1 / 100%</div><div id="tx81" class="t" style="position:absolute;left:1655.5px;top:1009.59px;font-family:'Liberation Sans', sans-serif;font-size:12px;line-height:12px;white-space:pre;color:#ececec;transform:scaleX(1.015);transform-origin:0 0;z-index:3">Decimal</div>
</body></html>
